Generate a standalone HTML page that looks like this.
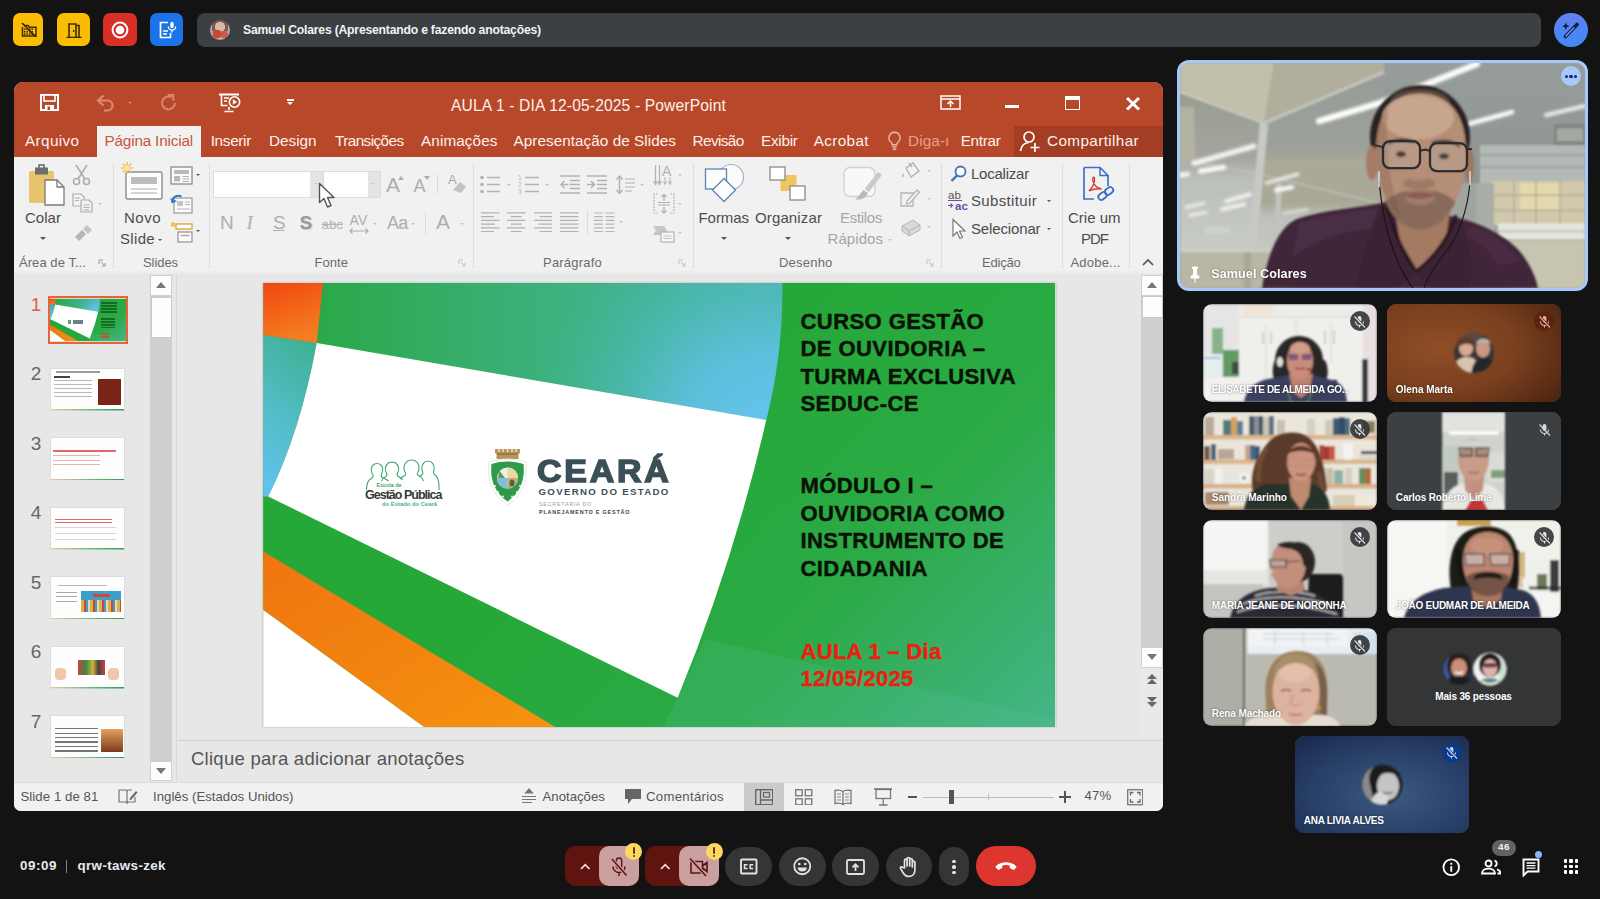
<!DOCTYPE html>
<html lang="pt-BR">
<head>
<meta charset="utf-8">
<title>Meet</title>
<style>
*{box-sizing:border-box;margin:0;padding:0}
html,body{width:1600px;height:899px;overflow:hidden;background:#131313}
body{font-family:"Liberation Sans",sans-serif;color:#fff;position:relative}
.abs{position:absolute}
#stage{position:absolute;left:0;top:0;width:1600px;height:899px;overflow:hidden;background:#131313}
/* top bar */
.tb{position:absolute;top:13px;width:33px;height:34px;border-radius:8px}
#namebar{position:absolute;left:197px;top:13px;width:1344px;height:34px;border-radius:8px;background:#3c4043}
#namebar span{position:absolute;left:46px;top:9px;font-size:12.5px;font-weight:bold;color:#f1f3f4;letter-spacing:-0.1px;white-space:nowrap}
/* ppt window */
#ppt{position:absolute;left:14px;top:82px;width:1149px;height:729px;border-radius:9px 9px 7px 7px;overflow:hidden;background:#e7e7e7;color:#444}
#ppt .title{position:absolute;left:0;top:0;width:100%;height:75px;background:#b8482a}
#ribbon{position:absolute;left:0;top:75px;width:100%;height:115px;background:#f2f1f1}
.tab{position:absolute;top:49px;font-size:17px;color:#fbe9e3;white-space:nowrap;letter-spacing:-0.2px}
.rl{position:absolute;font-size:16px;color:#4a4a4a;white-space:nowrap;letter-spacing:-0.2px}
.gl{position:absolute;top:172px;font-size:14.5px;color:#666;white-space:nowrap;letter-spacing:-0.2px}
.vsep{position:absolute;top:82px;width:1px;height:104px;background:#dcdcdc}
/* tiles */
.tile{position:absolute;width:174px;height:98px;border-radius:9px;overflow:hidden;background:#3c4043}
.tile .nm{position:absolute;left:8px;bottom:6px;font-size:11px;font-weight:bold;color:#fff;white-space:nowrap;letter-spacing:-0.3px;text-shadow:0 0 2px rgba(0,0,0,.6)}
.mic{position:absolute;right:8px;top:8px;width:18px;height:18px;border-radius:50%;background:rgba(50,50,50,.85)}
/* bottom */
.cb{position:absolute;top:850px;height:31px;border-radius:16px;background:#333537}
.t{position:absolute;white-space:nowrap;line-height:1}
.b{position:absolute;display:block}
.dd{position:absolute;display:block;width:0;height:0;border-style:solid;border-color:transparent}
</style>
</head>
<body>
<div id="stage">
<svg width="0" height="0" style="position:absolute">
<defs>
<filter id="bl08" x="-5%" y="-5%" width="110%" height="110%"><feGaussianBlur stdDeviation="0.8"/></filter>
<filter id="bl1" x="-5%" y="-5%" width="110%" height="110%"><feGaussianBlur stdDeviation="1.1"/></filter>
<filter id="bl2" x="-10%" y="-10%" width="120%" height="120%"><feGaussianBlur stdDeviation="2"/></filter>
<filter id="bl4" x="-10%" y="-10%" width="120%" height="120%"><feGaussianBlur stdDeviation="4"/></filter>
<linearGradient id="gR" gradientUnits="userSpaceOnUse" x1="450" y1="100" x2="820" y2="470"><stop offset="0" stop-color="#25a838"/><stop offset=".45" stop-color="#2baa46"/><stop offset="1" stop-color="#49b692"/></linearGradient>
<linearGradient id="gT" x1="0" y1="0" x2="1" y2="0"><stop offset="0" stop-color="#2aa848"/><stop offset=".5" stop-color="#3db17e"/><stop offset="1" stop-color="#49b5a6"/></linearGradient>
<radialGradient id="gT2" gradientUnits="userSpaceOnUse" cx="500" cy="150" r="230"><stop offset="0" stop-color="#66c4ee"/><stop offset=".35" stop-color="#60c1e6" stop-opacity=".85"/><stop offset="1" stop-color="#4ab6ae" stop-opacity="0"/></radialGradient>
<linearGradient id="gL" x1="0.6" y1="0" x2="0.3" y2="1"><stop offset="0" stop-color="#3fb296"/><stop offset=".5" stop-color="#52bcc4"/><stop offset="1" stop-color="#62c2ee"/></linearGradient>
<linearGradient id="gO" x1="0" y1="0" x2="0.35" y2="1"><stop offset="0" stop-color="#f0440e"/><stop offset="1" stop-color="#f47d20"/></linearGradient>
<linearGradient id="gO2" x1="0" y1="0" x2="1" y2="1"><stop offset="0" stop-color="#ef7410"/><stop offset="1" stop-color="#f5920f"/></linearGradient>
<symbol id="slideart" viewBox="0 0 792 444" preserveAspectRatio="none">
<rect width="792" height="444" fill="url(#gR)"/><rect x="-3" y="200" width="10" height="80" fill="#24a83a"/>
<path d="M519 0Q520 70 503 137Q470 280 414.400 414.800V444H792V0z" fill="url(#gR)"/>
<path d="M442 356L792 436V444H400z" fill="#55bd94" opacity=".22"/>
<path d="M60 0H519Q520 70 503 137L53.500 60z" fill="url(#gT)"/>
<path d="M60 0H519Q520 70 503 137L53.500 60z" fill="url(#gT2)"/>
<path d="M-3 51.600L53.500 60Q37 150 5 213.500H-3z" fill="url(#gL)"/>
<path d="M-3 -3H60L53.500 60 -3 51.600z" fill="url(#gO)"/>
<path d="M53.500 60L503 137Q470 280 414.400 414.800L5 213.500Q37 150 53.500 60z" fill="#fff"/>
<path d="M-3 266.700L292 444H160.700L-3 324.800z" fill="url(#gO2)"/>
<path d="M-3 324.800L160.700 444H-3z" fill="#fff"/>
</symbol>
</defs>
</svg>

<i class="b" style="left:13.2px;top:13.2px;width:30.0px;height:33.2px;background:#fbbc04;border-radius:7px"></i>
<i class="b" style="left:57.2px;top:13.2px;width:33.0px;height:33.2px;background:#fbbc04;border-radius:7px"></i>
<i class="b" style="left:103.2px;top:13.2px;width:33.6px;height:33.2px;background:#d93025;border-radius:7px"></i>
<i class="b" style="left:150.0px;top:13.2px;width:33.4px;height:33.2px;background:#1a73e8;border-radius:7px"></i>
<svg class="b" style="left:20.5px;top:21.5px;" width="16.5" height="15.5" viewBox="0 0 16.5 15.5"><path d="M3.500 3.500H7l1.500 1.800h6.500v8.700H1.500V5" fill="none" stroke="#3a2c02" stroke-width="1.500"/><path d="M3 7.300h10M3 9.700h10M3 12.100h10" stroke="#3a2c02" stroke-width="1.500" stroke-dasharray="1.500 1"/><path d="M1 1l14 14" stroke="#3a2c02" stroke-width="1.700"/></svg>
<svg class="b" style="left:66.0px;top:22.5px;" width="16.0" height="15.5" viewBox="0 0 16 15.500"><path d="M.5 14.500h15" stroke="#3a2c02" stroke-width="1.600"/><path d="M3 14V1h7v13M10 2.500h3V14" fill="none" stroke="#3a2c02" stroke-width="1.600"/><circle cx="7.700" cy="8" r=".9" fill="#3a2c02"/></svg>
<svg class="b" style="left:111.0px;top:21.0px;" width="18.0" height="18.0" viewBox="0 0 18 18"><circle cx="9" cy="9" r="7.400" fill="none" stroke="#fff" stroke-width="2"/><circle cx="9" cy="9" r="4.300" fill="#fff"/></svg>
<svg class="b" style="left:158.0px;top:21.0px;" width="19.0" height="18.0" viewBox="0 0 19 18"><path d="M10 1.500H2.500v15h10V12" fill="none" stroke="#fff" stroke-width="1.700"/><path d="M5 10h5M5 13h4" stroke="#fff" stroke-width="1.500"/><rect x="12.300" y=".8" width="3.400" height="6.400" rx="1.700" fill="#fff"/><path d="M10.300 5.500a3.700 3.700 0 0 0 7.400 0M14 9.200v2.300" fill="none" stroke="#fff" stroke-width="1.300"/></svg>
<i class="b" style="left:196.7px;top:13.2px;width:1344.5px;height:33.4px;background:#3c4043;border-radius:8px"></i>
<i class="b" style="left:209.7px;top:20.0px;width:20.3px;height:20.3px;border-radius:50%;background:radial-gradient(circle at 35% 70%,#c9473a 0 22%,transparent 24%),radial-gradient(circle at 70% 72%,#d1574a 0 18%,transparent 20%),radial-gradient(circle at 50% 35%,#d8b8a8 0 30%,#7a5a55 32% 50%,#b9a9a8 52%)"></i>
<span class="t" style="left:243.0px;top:24.2px;font-size:12.2px;letter-spacing:-0.21px;color:#f1f3f4;font-weight:bold;">Samuel Colares (Apresentando e fazendo anotações)</span>
<i class="b" style="left:1554.0px;top:12.7px;width:34.0px;height:34.3px;border-radius:50%;background:linear-gradient(170deg,#6a7fee,#4a86f5 60%,#3f8bf7)"></i>
<svg class="b" style="left:1561.0px;top:21.0px;" width="20.0" height="18.0" viewBox="0 0 20 18"><path d="M4.500 15.500L16 3.500" stroke="#0b1d4d" stroke-width="3.600" stroke-linecap="round"/><path d="M5 15L13 6.700" stroke="#8fa8f5" stroke-width="1.200" stroke-linecap="round"/><path d="M4.800 1.500l1.100 2.600 2.600 1.100-2.600 1.100-1.100 2.600-1.100-2.600L1.100 5.200l2.600-1.100z" fill="#0b1d4d"/></svg>

<div id="ppt">
<div class="title"></div>
<i class="b" style="left:1000.0px;top:44.0px;width:149.0px;height:31.0px;background:#a33d23"></i>
<i class="b" style="left:83.0px;top:43.5px;width:104.0px;height:32.5px;background:#f2f1f1"></i>
<span class="t" style="left:437.0px;top:15.8px;font-size:15.6px;letter-spacing:0.15px;color:#fdf1ec;">AULA 1 - DIA 12-05-2025 - PowerPoint</span>
<svg class="b" style="left:26.0px;top:12.0px;" width="19.0" height="17.0" viewBox="0 0 19 17"><path d="M1 1h17v15H1z" fill="none" stroke="#fff" stroke-width="2"/><rect x="4" y="1" width="11" height="6" fill="#b8482a" stroke="#fff" stroke-width="1.6"/><rect x="5" y="11" width="9" height="5" fill="#fff"/><rect x="7.5" y="12.5" width="2.5" height="3.5" fill="#b8482a"/></svg>
<svg class="b" style="left:82.0px;top:12.0px;" width="20.0" height="18.0" viewBox="0 0 20 18"><path d="M2 6.5h9.5a5 5 0 0 1 0 10H8" fill="none" stroke="#dd8a70" stroke-width="2.2"/><path d="M7.5 1.5L2 6.5l5.5 5" fill="none" stroke="#dd8a70" stroke-width="2.2"/></svg>
<i class="dd" style="left:113.6px;top:19.8px;border-width:2.6px 2.4px 0 2.4px;border-top-color:#dd8a70"></i>
<svg class="b" style="left:146.0px;top:12.0px;" width="17.0" height="18.0" viewBox="0 0 17 18"><path d="M11.5 3.2A6.5 6.5 0 1 0 15 9" fill="none" stroke="#d98367" stroke-width="2.2"/><path d="M8 1.2h5.2v5.2" fill="none" stroke="#d98367" stroke-width="2.2"/></svg>
<svg class="b" style="left:204.0px;top:11.0px;" width="24.0" height="20.0" viewBox="0 0 24 20"><path d="M1 1.5h20" stroke="#fff" stroke-width="2"/><path d="M3.5 2v10.5h6" fill="none" stroke="#fff" stroke-width="1.6"/><path d="M6 5h5M6 8h3" stroke="#fff" stroke-width="1.3"/><circle cx="16.5" cy="9" r="5.2" fill="#b8482a" stroke="#fff" stroke-width="1.6"/><path d="M14.8 6.3l4.4 2.7-4.4 2.7z" fill="#fff"/><path d="M11 14v3M6.5 18.5h9" stroke="#fff" stroke-width="1.6"/></svg>
<i class="b" style="left:272.5px;top:17.0px;width:7.0px;height:1.6px;background:#fff"></i>
<i class="dd" style="left:272.6px;top:20.3px;border-width:3.7px 3.4px 0 3.4px;border-top-color:#fff"></i>
<svg class="b" style="left:926.0px;top:13.0px;" width="21.0" height="15.0" viewBox="0 0 21 15"><rect x="1" y="1" width="19" height="13" fill="none" stroke="#fff" stroke-width="1.5"/><path d="M1 4h19" stroke="#fff" stroke-width="1.5"/><path d="M10.5 12V6.5M7.5 9l3-3 3 3" fill="none" stroke="#fff" stroke-width="1.5"/></svg>
<i class="b" style="left:990.5px;top:23.0px;width:14.0px;height:2.6px;background:#fff"></i>
<i class="b" style="left:1051.0px;top:13.5px;width:14.5px;height:14.0px;border:1.6px solid #fff;border-top-width:4px"></i>
<svg class="b" style="left:1111.0px;top:13.5px;" width="16.0" height="15.5" viewBox="0 0 16 15.5"><path d="M2 2l12 11.5M14 2L2 13.5" stroke="#fff" stroke-width="3"/></svg>
<span class="t" style="left:11.0px;top:50.5px;font-size:15.3px;letter-spacing:0.37px;color:#fdf1ec;">Arquivo</span>
<span class="t" style="left:196.7px;top:50.5px;font-size:15.3px;letter-spacing:-0.32px;color:#fdf1ec;">Inserir</span>
<span class="t" style="left:255.0px;top:50.5px;font-size:15.3px;letter-spacing:-0.02px;color:#fdf1ec;">Design</span>
<span class="t" style="left:321.0px;top:50.5px;font-size:15.3px;letter-spacing:-0.58px;color:#fdf1ec;">Transições</span>
<span class="t" style="left:407.0px;top:50.5px;font-size:15.3px;letter-spacing:0.09px;color:#fdf1ec;">Animações</span>
<span class="t" style="left:499.5px;top:50.5px;font-size:15.3px;letter-spacing:0.04px;color:#fdf1ec;">Apresentação de Slides</span>
<span class="t" style="left:678.6px;top:50.5px;font-size:15.3px;letter-spacing:-0.61px;color:#fdf1ec;">Revisão</span>
<span class="t" style="left:747.0px;top:50.5px;font-size:15.3px;letter-spacing:-0.28px;color:#fdf1ec;">Exibir</span>
<span class="t" style="left:799.7px;top:50.5px;font-size:15.3px;letter-spacing:0.37px;color:#fdf1ec;">Acrobat</span>
<span class="t" style="left:946.7px;top:50.5px;font-size:15.3px;letter-spacing:-0.31px;color:#fdf1ec;">Entrar</span>
<span class="t" style="left:1033.0px;top:50.5px;font-size:15.3px;letter-spacing:0.37px;color:#fdf1ec;">Compartilhar</span>
<span class="t" style="left:90.5px;top:50.5px;font-size:15.3px;letter-spacing:-0.18px;color:#c9563a;">Página Inicial</span>
<span class="t" style="left:894.0px;top:50.5px;font-size:15.3px;letter-spacing:0.11px;color:#e3a08c;">Diga-ı</span>
<svg class="b" style="left:873.0px;top:49.0px;" width="15.0" height="21.0" viewBox="0 0 15 21"><path d="M7.5 1.2a5.6 5.6 0 0 1 3.4 10c-.8.8-1.1 1.5-1.1 2.6H5.2c0-1.100-.3-1.800-1.100-2.600a5.600 5.600 0 0 1 3.400-10z" fill="none" stroke="#eab7a6" stroke-width="1.4"/><path d="M5.300 16h4.400M5.800 18.300h3.400" stroke="#eab7a6" stroke-width="1.4"/></svg>
<svg class="b" style="left:1005.0px;top:48.0px;" width="22.0" height="23.0" viewBox="0 0 22 23"><circle cx="10" cy="7" r="5" fill="none" stroke="#fff" stroke-width="1.7"/><path d="M1.500 21c.8-5 3.500-8 8-8.500M16 13v9M11.500 17.500h9" fill="none" stroke="#fff" stroke-width="1.700"/></svg>
<div id="ribbon"></div>
<i class="b" style="left:98.5px;top:81.0px;width:1.0px;height:105.0px;background:#dedede"></i>
<i class="b" style="left:195.0px;top:81.0px;width:1.0px;height:105.0px;background:#dedede"></i>
<i class="b" style="left:458.5px;top:81.0px;width:1.0px;height:105.0px;background:#dedede"></i>
<i class="b" style="left:678.5px;top:81.0px;width:1.0px;height:105.0px;background:#dedede"></i>
<i class="b" style="left:926.5px;top:81.0px;width:1.0px;height:105.0px;background:#dedede"></i>
<i class="b" style="left:1048.0px;top:81.0px;width:1.0px;height:105.0px;background:#dedede"></i>
<i class="b" style="left:1114.7px;top:81.0px;width:1.0px;height:105.0px;background:#dedede"></i>
<svg class="b" style="left:14.0px;top:82.0px;" width="38.0" height="42.0" viewBox="0 0 38 42"><rect x="1" y="7" width="25" height="32" rx="1.500" fill="#e9c46f"/><rect x="7" y="3.500" width="13" height="7" fill="#6d6d6d"/><rect x="11" y="1" width="5" height="5" fill="none" stroke="#6d6d6d" stroke-width="1.600"/><path d="M17 16h12l7 7v18H17z" fill="#fff" stroke="#7a7a7a" stroke-width="1.300"/><path d="M29 16v7h7" fill="none" stroke="#7a7a7a" stroke-width="1.300"/></svg>
<span class="t" style="left:11.0px;top:127.7px;font-size:15px;letter-spacing:0.03px;color:#4c4c4c;">Colar</span>
<i class="dd" style="left:25.5px;top:154.5px;border-width:3.2px 3.0px 0 3.0px;border-top-color:#555"></i>
<svg class="b" style="left:58.0px;top:82.0px;" width="19.0" height="22.0" viewBox="0 0 19 22"><path d="M4 1l9 14M15 1L6 15" stroke="#adadad" stroke-width="1.600"/><circle cx="4.500" cy="17.500" r="3" fill="none" stroke="#adadad" stroke-width="1.600"/><circle cx="14.500" cy="17.500" r="3" fill="none" stroke="#adadad" stroke-width="1.600"/></svg>
<svg class="b" style="left:58.0px;top:111.0px;" width="21.0" height="20.0" viewBox="0 0 21 20"><path d="M1 1h8l3 3v9H1z" fill="#f4f4f4" stroke="#adadad" stroke-width="1.200"/><path d="M9 7h8l3 3v9H9z" fill="#f4f4f4" stroke="#adadad" stroke-width="1.200"/><path d="M11.500 12h6M11.500 14.500h6M11.500 17h6M3 5h5M3 7.500h4" stroke="#adadad" stroke-width="1"/></svg>
<i class="dd" style="left:84.1px;top:120.8px;border-width:2.6px 2.4px 0 2.4px;border-top-color:#bbb"></i>
<svg class="b" style="left:59.0px;top:142.0px;" width="20.0" height="18.0" viewBox="0 0 20 18"><path d="M2 13l7-7 4 4-7 7z" fill="#b5b5b5"/><path d="M10 5l4-4 5 5-4 4z" fill="#c4c4c4"/></svg>
<span class="t" style="left:5.0px;top:174.0px;font-size:13px;letter-spacing:0.06px;color:#6b6b6b;">Área de T...</span>
<svg class="b" style="left:84.0px;top:177.0px;" width="8.0" height="8.0" viewBox="0 0 8 8"><path d="M1 5V1h4M3 3l4 4M7 4v3H4" fill="none" stroke="#9a9a9a" stroke-width="1"/></svg>
<svg class="b" style="left:106.0px;top:79.0px;" width="44.0" height="40.0" viewBox="0 0 44 40"><rect x="6" y="11" width="36" height="27" rx="1.500" fill="#fdfdfd" stroke="#8d8d8d" stroke-width="1.400"/><rect x="11" y="16" width="26" height="7" fill="#bdbdbd"/><path d="M11 28h26M11 32h26" stroke="#c4c4c4" stroke-width="1.400"/><g stroke="#f0c24d" stroke-width="1.500"><path d="M7 1v12M1 7h12M2.800 2.800l8.400 8.400M11.200 2.800l-8.400 8.400"/></g><circle cx="7" cy="7" r="2.600" fill="#fbe7a6"/></svg>
<span class="t" style="left:110.0px;top:127.7px;font-size:15px;letter-spacing:0.50px;color:#4c4c4c;">Novo</span>
<span class="t" style="left:106.0px;top:148.7px;font-size:15px;letter-spacing:0.33px;color:#4c4c4c;">Slide</span>
<i class="dd" style="left:144.3px;top:156.7px;border-width:2.9px 2.7px 0 2.7px;border-top-color:#555"></i>
<svg class="b" style="left:156.0px;top:84.0px;" width="23.0" height="19.0" viewBox="0 0 23 19"><rect x="1" y="1" width="21" height="17" fill="#fafafa" stroke="#8d8d8d" stroke-width="1.300"/><rect x="4" y="4" width="15" height="4" fill="#b9b9b9"/><rect x="4" y="10" width="6" height="5.500" fill="#b9b9b9"/><path d="M12.500 10.500h6.500M12.500 13h6.500M12.500 15.500h6.500" stroke="#b0b0b0" stroke-width="1"/></svg>
<i class="dd" style="left:181.9px;top:91.7px;border-width:2.7px 2.5px 0 2.5px;border-top-color:#555"></i>
<svg class="b" style="left:156.0px;top:111.0px;" width="23.0" height="21.0" viewBox="0 0 23 21"><rect x="4" y="5" width="18" height="15" fill="#fafafa" stroke="#9a9a9a" stroke-width="1.200"/><rect x="7" y="8" width="6" height="5" fill="#c4c4c4"/><path d="M15 9h5M15 11.500h5M7 16h13" stroke="#b5b5b5" stroke-width="1"/><path d="M2 9.500C2 4 7 1.500 11.500 3.500" fill="none" stroke="#3b78c5" stroke-width="2"/><path d="M0 5l2.200 5.500L7 8z" fill="#3b78c5"/></svg>
<svg class="b" style="left:156.0px;top:139.0px;" width="24.0" height="22.0" viewBox="0 0 24 22"><rect x="6" y="3" width="16" height="5" fill="#fff" stroke="#e3a542" stroke-width="1.400"/><rect x="1" y="1.500" width="4" height="4" fill="#f0c24d"/><rect x="8" y="11" width="14" height="10" fill="#fafafa" stroke="#9a9a9a" stroke-width="1.300"/><path d="M10.500 14.500h9" stroke="#aaa" stroke-width="1.500"/></svg>
<i class="dd" style="left:181.9px;top:148.2px;border-width:2.7px 2.5px 0 2.5px;border-top-color:#555"></i>
<span class="t" style="left:129.0px;top:174.0px;font-size:13px;letter-spacing:-0.07px;color:#6b6b6b;">Slides</span>
<i class="b" style="left:199.0px;top:89.0px;width:110.5px;height:27.0px;background:#fff;border:1px solid #dcdcdc"></i>
<i class="b" style="left:296.0px;top:90.0px;width:12.5px;height:25.0px;background:#e4e4e4"></i>
<i class="b" style="left:309.0px;top:89.0px;width:58.0px;height:27.0px;background:#fff;border:1px solid #dcdcdc"></i>
<i class="b" style="left:353.5px;top:90.0px;width:12.5px;height:25.0px;background:#e4e4e4"></i>
<i class="dd" style="left:357.1px;top:101.3px;border-width:2.6px 2.4px 0 2.4px;border-top-color:#c8c8c8"></i>
<i class="dd" style="left:299.6px;top:101.3px;border-width:2.6px 2.4px 0 2.4px;border-top-color:#c8c8c8"></i>
<span class="t" style="left:372.0px;top:92.2px;font-size:21px;letter-spacing:-0.51px;color:#adadad;">A</span>
<svg class="b" style="left:384.0px;top:93.0px;" width="6.0" height="6.0" viewBox="0 0 6 6"><path d="M0 5l3-4 3 4z" fill="#adadad"/></svg>
<span class="t" style="left:399.5px;top:94.9px;font-size:18px;letter-spacing:-0.01px;color:#adadad;">A</span>
<svg class="b" style="left:410.0px;top:93.0px;" width="6.0" height="6.0" viewBox="0 0 6 6"><path d="M0 1l3 4 3-4z" fill="#adadad"/></svg>
<i class="b" style="left:423.0px;top:92.0px;width:1.0px;height:20.0px;background:#dcdcdc"></i>
<svg class="b" style="left:434.0px;top:91.0px;" width="19.0" height="22.0" viewBox="0 0 19 22"><text x="0" y="11" font-family="Liberation Sans,sans-serif" font-size="13" fill="#a8a8a8">A</text><path d="M5 17l7-8 6 4.500-5 6.500z" fill="#c2c2c2"/></svg>
<span class="t" style="left:206.0px;top:131.3px;font-size:19px;letter-spacing:-0.22px;color:#adadad;">N</span>
<span class="t" style="left:232.5px;top:131.3px;font-size:19px;letter-spacing:3.72px;color:#adadad;font-style:italic;font-family:'Liberation Serif',serif;">I</span>
<span class="t" style="left:259.0px;top:131.3px;font-size:19px;letter-spacing:-1.17px;color:#adadad;text-decoration:underline;">S</span>
<span class="t" style="left:285.5px;top:131.3px;font-size:19px;letter-spacing:-0.67px;color:#999;font-weight:bold;text-shadow:1px 1px 1px #ccc;">S</span>
<span class="t" style="left:307.5px;top:135.6px;font-size:13.5px;letter-spacing:-0.09px;color:#b3b3b3;text-decoration:line-through;">abc</span>
<span class="t" style="left:335.5px;top:131.3px;font-size:14px;letter-spacing:0.18px;color:#adadad;">AV</span>
<svg class="b" style="left:335.0px;top:146.0px;" width="20.0" height="6.0" viewBox="0 0 20 6"><path d="M1 3h18M3.500 .5L1 3l2.500 2.500M16.500 .5L19 3l-2.500 2.500" fill="none" stroke="#adadad" stroke-width="1.100"/></svg>
<i class="dd" style="left:359.4px;top:140.9px;border-width:2.2px 2.1px 0 2.1px;border-top-color:#c4c4c4"></i>
<span class="t" style="left:373.0px;top:131.9px;font-size:18px;letter-spacing:-0.76px;color:#adadad;">Aa</span>
<i class="dd" style="left:396.9px;top:140.9px;border-width:2.2px 2.1px 0 2.1px;border-top-color:#c4c4c4"></i>
<i class="b" style="left:411.0px;top:130.0px;width:1.0px;height:22.0px;background:#dcdcdc"></i>
<span class="t" style="left:422.0px;top:128.7px;font-size:21px;letter-spacing:-0.51px;color:#adadad;">A</span>
<i class="dd" style="left:445.9px;top:140.9px;border-width:2.2px 2.1px 0 2.1px;border-top-color:#c4c4c4"></i>
<span class="t" style="left:300.5px;top:174.0px;font-size:13px;letter-spacing:0.05px;color:#6b6b6b;">Fonte</span>
<svg class="b" style="left:444.0px;top:177.0px;" width="8.0" height="8.0" viewBox="0 0 8 8"><path d="M1 5V1h4M3 3l4 4M7 4v3H4" fill="none" stroke="#c0c0c0" stroke-width="1"/></svg>
<svg class="b" style="left:466.0px;top:92.5px;" width="21.0" height="19.0" viewBox="0 0 21 19"><g fill="#b2b2b2"><circle cx="2" cy="2.500" r="1.800"/><circle cx="2" cy="9.500" r="1.800"/><circle cx="2" cy="16.500" r="1.800"/></g><path d="M7 2.500h13M7 9.500h13M7 16.500h13" stroke="#b2b2b2" stroke-width="1.300"/></svg>
<i class="dd" style="left:492.9px;top:101.5px;border-width:2.2px 2.1px 0 2.1px;border-top-color:#c4c4c4"></i>
<svg class="b" style="left:504.0px;top:92.5px;" width="21.5" height="19.0" viewBox="0 0 21.500 19"><g font-family="Liberation Sans,sans-serif" font-size="6.500" fill="#b2b2b2"><text x="0" y="5">1</text><text x="0" y="12">2</text><text x="0" y="19">3</text></g><path d="M7 2.500h14M7 9.500h14M7 16.500h14" stroke="#b2b2b2" stroke-width="1.300"/></svg>
<i class="dd" style="left:531.4px;top:101.5px;border-width:2.2px 2.1px 0 2.1px;border-top-color:#c4c4c4"></i>
<svg class="b" style="left:545.5px;top:92.5px;" width="20.5" height="19.0" viewBox="0 0 20.500 19"><path d="M0 1h20.500M10 5.500h10.500M10 9.500h10.500M10 13.500h10.500M0 18h20.500" stroke="#b2b2b2" stroke-width="1.300"/><path d="M8.500 9.500H1M4.500 6L1 9.500 4.500 13" fill="none" stroke="#b2b2b2" stroke-width="1.500"/></svg>
<svg class="b" style="left:573.0px;top:92.5px;" width="20.0" height="19.0" viewBox="0 0 20 19"><path d="M0 1h20M10 5.500h10M10 9.500h10M10 13.500h10M0 18h20" stroke="#b2b2b2" stroke-width="1.300"/><path d="M0 9.500h7.500M4 6l3.500 3.500L4 13" fill="none" stroke="#b2b2b2" stroke-width="1.500"/></svg>
<svg class="b" style="left:602.0px;top:92.5px;" width="19.0" height="19.5" viewBox="0 0 19 19.500"><path d="M3.500 1v17.500M.5 4.500l3-3.500 3 3.500M.5 15l3 3.500 3-3.500" fill="none" stroke="#b2b2b2" stroke-width="1.400"/><path d="M9 4h10M9 8h10M9 12h10M9 16h7" stroke="#b2b2b2" stroke-width="1.200"/></svg>
<i class="dd" style="left:625.9px;top:101.5px;border-width:2.2px 2.1px 0 2.1px;border-top-color:#c4c4c4"></i>
<svg class="b" style="left:639.0px;top:82.0px;" width="21.0" height="22.0" viewBox="0 0 21 22"><path d="M2.500 1v19M6.500 1v19M.5 17l2 3.500 2-3.500M4.500 17l2 3.500 2-3.500" fill="none" stroke="#b2b2b2" stroke-width="1.200"/><text x="9" y="12" font-family="Liberation Sans,sans-serif" font-size="14" fill="#b2b2b2">A</text><path d="M12 13v7M17 13v7M10.300 17.500l1.700 3 1.700-3M15.300 17.500l1.700 3 1.700-3" fill="none" stroke="#b2b2b2" stroke-width="1"/></svg>
<i class="dd" style="left:664.4px;top:92.0px;border-width:2.2px 2.1px 0 2.1px;border-top-color:#c4c4c4"></i>
<svg class="b" style="left:639.0px;top:111.0px;" width="22.0" height="21.5" viewBox="0 0 22 21.500"><path d="M5 1H1v19h4M17 1h4v19h-4" fill="none" stroke="#b2b2b2" stroke-width="1.200" stroke-dasharray="2 1.200"/><path d="M11 1.500v6.500M8.500 4L11 1.500 13.500 4M11 20v-6.500M8.500 17.500L11 20l2.500-2.500" fill="none" stroke="#b2b2b2" stroke-width="1.300"/><path d="M5 9.500h12M5 12h12" stroke="#b2b2b2" stroke-width="1.100"/></svg>
<i class="dd" style="left:664.4px;top:121.0px;border-width:2.2px 2.1px 0 2.1px;border-top-color:#c4c4c4"></i>
<svg class="b" style="left:638.0px;top:143.0px;" width="23.0" height="18.0" viewBox="0 0 23 18"><path d="M1 1h11l3 4.500-3 4.500H1l3-4.500z" fill="#c6c6c6"/><rect x="9" y="7" width="13" height="10" fill="#f6f6f6" stroke="#b2b2b2" stroke-width="1.200"/><path d="M11.500 11h8M11.500 13.500h8" stroke="#c0c0c0" stroke-width="1"/></svg>
<i class="dd" style="left:664.4px;top:150.4px;border-width:2.2px 2.1px 0 2.1px;border-top-color:#c4c4c4"></i>
<svg class="b" style="left:467.0px;top:129.5px;" width="18.5" height="20.5" viewBox="0 0 18.5 20.5"><path d="M0.0 0.8h18.5M0.0 4.6h12.9M0.0 8.4h18.5M0.0 12.1h13.9M0.0 15.9h18.5M0.0 19.7h12.9" stroke="#b2b2b2" stroke-width="1.3"/></svg>
<svg class="b" style="left:493.0px;top:129.5px;" width="18.5" height="20.5" viewBox="0 0 18.5 20.5"><path d="M0.0 0.8h18.5M3.7 4.6h11.1M0.0 8.4h18.5M3.7 12.1h11.1M0.0 15.9h18.5M3.7 19.7h11.1" stroke="#b2b2b2" stroke-width="1.3"/></svg>
<svg class="b" style="left:519.5px;top:129.5px;" width="18.5" height="20.5" viewBox="0 0 18.5 20.5"><path d="M0.0 0.8h18.5M5.6 4.6h12.9M0.0 8.4h18.5M4.6 12.1h13.9M0.0 15.9h18.5M5.6 19.7h12.9" stroke="#b2b2b2" stroke-width="1.3"/></svg>
<svg class="b" style="left:546.0px;top:129.5px;" width="18.5" height="20.5" viewBox="0 0 18.5 20.5"><path d="M0.0 0.8h18.5M0.0 4.6h18.5M0.0 8.4h18.5M0.0 12.1h18.5M0.0 15.9h18.5M0.0 19.7h18.5" stroke="#b2b2b2" stroke-width="1.3"/></svg>
<i class="b" style="left:572.5px;top:129.0px;width:1.0px;height:23.0px;background:#dcdcdc"></i>
<svg class="b" style="left:580.0px;top:129.5px;" width="20.5" height="20.5" viewBox="0 0 20.500 20.500"><path d="M0 1h9M0 4.700h9M0 8.400h9M0 12.100h9M0 15.800h9M0 19.500h9M11.500 1h9M11.500 4.700h9M11.500 8.400h9M11.500 12.100h9M11.500 15.800h9M11.500 19.500h9" stroke="#b5b5b5" stroke-width="1.200"/></svg>
<i class="dd" style="left:605.4px;top:138.9px;border-width:2.2px 2.1px 0 2.1px;border-top-color:#c4c4c4"></i>
<span class="t" style="left:529.0px;top:174.0px;font-size:13px;letter-spacing:0.21px;color:#6b6b6b;">Parágrafo</span>
<svg class="b" style="left:664.0px;top:177.0px;" width="8.0" height="8.0" viewBox="0 0 8 8"><path d="M1 5V1h4M3 3l4 4M7 4v3H4" fill="none" stroke="#c0c0c0" stroke-width="1"/></svg>
<svg class="b" style="left:690.0px;top:81.0px;" width="42.0" height="40.0" viewBox="0 0 42 40"><circle cx="27" cy="14" r="12.500" fill="#fbfbfb" stroke="#9fb3cc" stroke-width="1.200"/><rect x="1.500" y="6" width="21" height="20" fill="#fcfcfc" stroke="#5f84b3" stroke-width="1.300"/><path d="M20 15.500l11.500 11.500L20 38.500 8.500 27z" fill="#fdfdfd" stroke="#5f84b3" stroke-width="1.300"/></svg>
<span class="t" style="left:684.5px;top:127.7px;font-size:15px;letter-spacing:-0.06px;color:#4c4c4c;">Formas</span>
<i class="dd" style="left:707.0px;top:154.5px;border-width:3.2px 3.0px 0 3.0px;border-top-color:#555"></i>
<svg class="b" style="left:755.0px;top:83.5px;" width="38.0" height="35.5" viewBox="0 0 38 35.500"><rect x="11.500" y="9" width="16" height="16" fill="#f0c560"/><rect x="1" y="1" width="15" height="13" fill="#fff" stroke="#8a8a8a" stroke-width="1.300"/><rect x="21" y="20" width="15" height="14" fill="#fff" stroke="#8a8a8a" stroke-width="1.300"/></svg>
<span class="t" style="left:741.0px;top:127.7px;font-size:15px;letter-spacing:0.13px;color:#4c4c4c;">Organizar</span>
<i class="dd" style="left:770.5px;top:154.5px;border-width:3.2px 3.0px 0 3.0px;border-top-color:#555"></i>
<svg class="b" style="left:828.0px;top:84.0px;" width="42.0" height="39.0" viewBox="0 0 42 39"><rect x="2" y="1.500" width="31" height="29" rx="6" fill="#f8f8f8" stroke="#d0d0d0" stroke-width="1.300"/><path d="M36 6c2 1 3 2 3.500 3.500L27 26l-4.500-3z" fill="#c9c9c9"/><path d="M21.500 24l4.500 3c-2 5-7 7-13 6.500 3-1.500 4-5 8.500-9.500z" fill="#b9b9b9"/></svg>
<span class="t" style="left:826.0px;top:127.7px;font-size:15px;letter-spacing:-0.31px;color:#a6a6a6;">Estilos</span>
<span class="t" style="left:813.5px;top:148.7px;font-size:15px;letter-spacing:0.07px;color:#a6a6a6;">Rápidos</span>
<i class="dd" style="left:874.4px;top:156.9px;border-width:2.2px 2.1px 0 2.1px;border-top-color:#c4c4c4"></i>
<svg class="b" style="left:886.0px;top:79.0px;" width="21.0" height="20.0" viewBox="0 0 21 20"><path d="M6 7l7-5 6 8-8 6z" fill="none" stroke="#b0b0b0" stroke-width="1.300"/><path d="M9 2l3 4" stroke="#b0b0b0" stroke-width="1.300"/><path d="M3 12c1.500 2 1.500 4 0 4.500-1.500-.5-1.500-2.500 0-4.500z" fill="#c0c0c0"/></svg>
<i class="dd" style="left:912.9px;top:88.0px;border-width:2.2px 2.1px 0 2.1px;border-top-color:#c4c4c4"></i>
<svg class="b" style="left:885.0px;top:106.0px;" width="22.0" height="20.0" viewBox="0 0 22 20"><path d="M2 5h12v13H2z" fill="none" stroke="#b5b5b5" stroke-width="1.300"/><path d="M8 13L18 2l2.500 2L11 15l-3.500 1z" fill="#f4f4f4" stroke="#b0b0b0" stroke-width="1.200"/></svg>
<i class="dd" style="left:912.9px;top:116.0px;border-width:2.2px 2.1px 0 2.1px;border-top-color:#c4c4c4"></i>
<svg class="b" style="left:885.0px;top:135.0px;" width="23.0" height="20.0" viewBox="0 0 23 20"><path d="M3 9l11-6 7 5v5l-11 6-7-5z" fill="#d9d9d9" stroke="#b8b8b8" stroke-width="1"/><path d="M3 9l7 5 11-6" fill="none" stroke="#b0b0b0" stroke-width="1"/><path d="M10 14v5" stroke="#b0b0b0" stroke-width="1"/></svg>
<i class="dd" style="left:912.9px;top:144.4px;border-width:2.2px 2.1px 0 2.1px;border-top-color:#c4c4c4"></i>
<span class="t" style="left:765.0px;top:174.0px;font-size:13px;letter-spacing:0.21px;color:#6b6b6b;">Desenho</span>
<svg class="b" style="left:912.0px;top:177.0px;" width="8.0" height="8.0" viewBox="0 0 8 8"><path d="M1 5V1h4M3 3l4 4M7 4v3H4" fill="none" stroke="#c0c0c0" stroke-width="1"/></svg>
<svg class="b" style="left:935.5px;top:83.0px;" width="17.5" height="17.0" viewBox="0 0 17.500 17"><circle cx="10.500" cy="6.500" r="5" fill="#fff" stroke="#3f74b6" stroke-width="1.800"/><path d="M7 10.500L1.500 16" stroke="#3f74b6" stroke-width="2.400"/></svg>
<span class="t" style="left:957.0px;top:83.7px;font-size:15px;letter-spacing:-0.23px;color:#4c4c4c;">Localizar</span>
<svg class="b" style="left:933.0px;top:108.0px;" width="22.0" height="22.0" viewBox="0 0 22 22"><g font-family="Liberation Sans,sans-serif" font-size="11.500" fill="#555"><text x="1" y="9">ab</text></g><path d="M1 10.500h14" stroke="#6a4fa3" stroke-width="1.100"/><g font-family="Liberation Sans,sans-serif" font-size="11.500" fill="#6a4fa3" font-weight="bold"><text x="8" y="20">ac</text></g><path d="M1 15.500h4.500M3.500 13.500l2 2-2 2" fill="none" stroke="#6a4fa3" stroke-width="1.100"/></svg>
<span class="t" style="left:957.0px;top:111.2px;font-size:15px;letter-spacing:0.35px;color:#4c4c4c;">Substituir</span>
<i class="dd" style="left:1032.6px;top:118.3px;border-width:2.6px 2.4px 0 2.4px;border-top-color:#555"></i>
<svg class="b" style="left:937.0px;top:136.0px;" width="16.0" height="22.0" viewBox="0 0 16 22"><path d="M2 1.500v16.500l4-4 3 6.500 2.500-1.200-3-6.300h5.500z" fill="#fff" stroke="#777" stroke-width="1.200"/></svg>
<span class="t" style="left:957.0px;top:138.7px;font-size:15px;letter-spacing:-0.14px;color:#4c4c4c;">Selecionar</span>
<i class="dd" style="left:1032.6px;top:145.8px;border-width:2.6px 2.4px 0 2.4px;border-top-color:#555"></i>
<span class="t" style="left:968.0px;top:174.0px;font-size:13px;letter-spacing:-0.21px;color:#6b6b6b;">Edição</span>
<svg class="b" style="left:1067.0px;top:84.0px;" width="36.0" height="39.0" viewBox="0 0 36 39"><path d="M3 1.500h16l8 8V20M3 1.500V33h10" fill="none" stroke="#3b6fc9" stroke-width="1.700"/><path d="M19 1.500v8h8" fill="none" stroke="#3b6fc9" stroke-width="1.500"/><path d="M8 25c4-4 6-9 5.500-13-1-2-2.500 0-1.500 3 1 4 4 7 8.500 8-3-.5-8 0-12.500 2z" fill="none" stroke="#d43a2f" stroke-width="1.300"/><g fill="none" stroke="#3b6fc9" stroke-width="1.800"><rect x="17" y="27" width="9" height="6" rx="3" transform="rotate(-38 21.500 30)"/><rect x="23.500" y="22" width="9" height="6" rx="3" transform="rotate(-38 28 25)"/></g></svg>
<span class="t" style="left:1054.0px;top:127.7px;font-size:15px;letter-spacing:-0.00px;color:#4c4c4c;">Crie um</span>
<span class="t" style="left:1067.0px;top:149.2px;font-size:15px;letter-spacing:-1.00px;color:#4c4c4c;">PDF</span>
<span class="t" style="left:1056.5px;top:174.0px;font-size:13px;letter-spacing:0.20px;color:#6b6b6b;">Adobe...</span>
<svg class="b" style="left:1128.0px;top:176.0px;" width="12.0" height="8.0" viewBox="0 0 12 8"><path d="M1 7l5-5 5 5" fill="none" stroke="#555" stroke-width="1.700"/></svg>
<svg class="b" style="left:304.0px;top:100.0px;" width="19.0" height="27.0" viewBox="0 0 19 27"><path d="M1.500 1.500v19l4.500-4 3.500 8.500 3.500-1.500-3.500-8h6.500z" fill="#fff" stroke="#555" stroke-width="1.400" stroke-linejoin="round"/></svg>
<i class="b" style="left:0.0px;top:189.0px;width:1149.0px;height:2.0px;background:#ededed"></i>
<i class="b" style="left:136.0px;top:193.0px;width:22.0px;height:506.0px;background:#cfcfcf"></i>
<i class="b" style="left:136.0px;top:193.0px;width:22.0px;height:21.0px;background:#fdfdfd;border:1px solid #d0d0d0"></i>
<i class="b" style="left:136.5px;top:214.5px;width:21.0px;height:41.5px;background:#fefefe;border:1px solid #cacaca"></i>
<i class="b" style="left:136.0px;top:679.0px;width:22.0px;height:20.0px;background:#fdfdfd;border:1px solid #d0d0d0"></i>
<svg class="b" style="left:142.0px;top:200.0px;" width="10.0" height="6.0" viewBox="0 0 10 6"><path d="M0 6l5-6 5 6z" fill="#777"/></svg>
<svg class="b" style="left:142.0px;top:686.0px;" width="10.0" height="6.0" viewBox="0 0 10 6"><path d="M0 0l5 6 5-6z" fill="#777"/></svg>
<i class="b" style="left:161.5px;top:193.0px;width:1.5px;height:506.0px;background:#dadada"></i>
<span class="t" style="left:16.8px;top:212.8px;font-size:19px;letter-spacing:-1.57px;color:#d9623f;">1</span>
<span class="t" style="left:16.8px;top:282.3px;font-size:19px;letter-spacing:-1.57px;color:#666;">2</span>
<i class="b" style="left:36.0px;top:285.6px;width:75.0px;height:43.0px;background:#fefefe;border:1px solid #dcdcdc;border-bottom:0;background-image:linear-gradient(90deg,#e9c9a0,#5fb877 60%,#3a9a58);background-size:100% 1.6px;background-position:0 100%;background-repeat:no-repeat"></i>
<span class="t" style="left:16.8px;top:351.8px;font-size:19px;letter-spacing:-1.57px;color:#666;">3</span>
<i class="b" style="left:36.0px;top:355.1px;width:75.0px;height:43.0px;background:#fefefe;border:1px solid #dcdcdc;border-bottom:0;background-image:linear-gradient(90deg,#e9c9a0,#5fb877 60%,#3a9a58);background-size:100% 1.6px;background-position:0 100%;background-repeat:no-repeat"></i>
<span class="t" style="left:16.8px;top:421.3px;font-size:19px;letter-spacing:-1.57px;color:#666;">4</span>
<i class="b" style="left:36.0px;top:424.6px;width:75.0px;height:43.0px;background:#fefefe;border:1px solid #dcdcdc;border-bottom:0;background-image:linear-gradient(90deg,#e9c9a0,#5fb877 60%,#3a9a58);background-size:100% 1.6px;background-position:0 100%;background-repeat:no-repeat"></i>
<span class="t" style="left:16.8px;top:490.8px;font-size:19px;letter-spacing:-1.57px;color:#666;">5</span>
<i class="b" style="left:36.0px;top:494.2px;width:75.0px;height:43.0px;background:#fefefe;border:1px solid #dcdcdc;border-bottom:0;background-image:linear-gradient(90deg,#e9c9a0,#5fb877 60%,#3a9a58);background-size:100% 1.6px;background-position:0 100%;background-repeat:no-repeat"></i>
<span class="t" style="left:16.8px;top:560.3px;font-size:19px;letter-spacing:-1.57px;color:#666;">6</span>
<i class="b" style="left:36.0px;top:563.8px;width:75.0px;height:43.0px;background:#fefefe;border:1px solid #dcdcdc;border-bottom:0;background-image:linear-gradient(90deg,#e9c9a0,#5fb877 60%,#3a9a58);background-size:100% 1.6px;background-position:0 100%;background-repeat:no-repeat"></i>
<span class="t" style="left:16.8px;top:629.8px;font-size:19px;letter-spacing:-1.57px;color:#666;">7</span>
<i class="b" style="left:36.0px;top:633.3px;width:75.0px;height:43.0px;background:#fefefe;border:1px solid #dcdcdc;border-bottom:0;background-image:linear-gradient(90deg,#e9c9a0,#5fb877 60%,#3a9a58);background-size:100% 1.6px;background-position:0 100%;background-repeat:no-repeat"></i>
<i class="b" style="left:33.5px;top:214.0px;width:80.0px;height:48.0px;border:2px solid #e8623a"></i>
<svg class="b" style="left:35.5px;top:216.0px;" width="76.0" height="44.0" viewBox="0 0 792 444"><use href="#slideart"/></svg>
<i class="b" style="left:87.0px;top:220.0px;width:16.0px;height:11.0px;background:repeating-linear-gradient(#135a20 0 2px,transparent 2px 3px);opacity:.8"></i>
<i class="b" style="left:87.0px;top:236.0px;width:14.0px;height:10.0px;background:repeating-linear-gradient(#135a20 0 2px,transparent 2px 3px);opacity:.8"></i>
<i class="b" style="left:87.0px;top:251.0px;width:8.0px;height:5.0px;background:repeating-linear-gradient(#c9502a 0 2px,transparent 2px 3px);opacity:.9"></i>
<i class="b" style="left:54.0px;top:238.0px;width:3.0px;height:4.0px;background:#5aa56c"></i>
<i class="b" style="left:59.0px;top:238.0px;width:10.0px;height:3.5px;background:#6f8187"></i>
<i class="b" style="left:84.0px;top:297.0px;width:22.5px;height:26.0px;background:#7a2418"></i>
<i class="b" style="left:42.0px;top:289.0px;width:44.0px;height:2.0px;background:#9a9a9a"></i>
<i class="b" style="left:40.0px;top:294.0px;width:16.0px;height:2.0px;background:#444"></i>
<i class="b" style="left:40.0px;top:298.0px;width:38.0px;height:20.0px;background:repeating-linear-gradient(#bbb 0 1px,transparent 1px 4px)"></i>
<i class="b" style="left:39.0px;top:368.0px;width:63.0px;height:1.5px;background:#e2686f"></i>
<i class="b" style="left:39.0px;top:373.0px;width:47.0px;height:10.0px;background:repeating-linear-gradient(#ecb0b0 0 1px,transparent 1px 4.5px)"></i>
<i class="b" style="left:41.0px;top:437.0px;width:57.0px;height:4.5px;background:repeating-linear-gradient(#e2686f 0 1.3px,transparent 1.3px 3px)"></i>
<i class="b" style="left:41.0px;top:445.0px;width:61.0px;height:14.0px;background:repeating-linear-gradient(#d6d6d6 0 1px,transparent 1px 6px)"></i>
<i class="b" style="left:67.0px;top:509.0px;width:39.5px;height:21.0px;background:linear-gradient(#3b9fc9 0 45%,transparent 45%),repeating-linear-gradient(90deg,#d9b24a 0 3px,#c9483a 3px 5px,#3b9fc9 5px 7px,#e8d9b0 7px 9px)"></i>
<i class="b" style="left:79.0px;top:511.5px;width:17.0px;height:3.0px;background:#d9443a"></i>
<i class="b" style="left:44.0px;top:502.5px;width:49.0px;height:1.5px;background:#b9b9b9"></i>
<i class="b" style="left:42.0px;top:509.5px;width:21.0px;height:11.5px;background:repeating-linear-gradient(#aaa 0 1px,transparent 1px 4.5px)"></i>
<i class="b" style="left:64.0px;top:578.0px;width:27.0px;height:15.0px;background:linear-gradient(90deg,#c9423a,#3a8a4a 30%,#d6b13a 55%,#444 75%,#c9423a)"></i>
<i class="b" style="left:41.0px;top:586.0px;width:11.0px;height:12.0px;background:#f1c7a8;border-radius:4px"></i>
<i class="b" style="left:94.0px;top:586.0px;width:11.0px;height:12.0px;background:#f1c7a8;border-radius:4px"></i>
<i class="b" style="left:87.0px;top:647.0px;width:22.0px;height:23.0px;background:linear-gradient(#e9a05c,#7c3a20)"></i>
<i class="b" style="left:41.0px;top:646.0px;width:43.0px;height:24.0px;background:repeating-linear-gradient(#777 0 1.2px,transparent 1.2px 4.5px)"></i>
<i class="b" style="left:1127.0px;top:193.0px;width:22.0px;height:464.0px;background:#cfcfcf"></i>
<i class="b" style="left:1127.0px;top:193.0px;width:22.0px;height:21.0px;background:#fdfdfd;border:1px solid #d0d0d0"></i>
<i class="b" style="left:1127.5px;top:214.0px;width:21.0px;height:22.0px;background:#fefefe;border:1px solid #cacaca"></i>
<i class="b" style="left:1127.0px;top:565.0px;width:22.0px;height:21.0px;background:#fdfdfd;border:1px solid #d0d0d0"></i>
<i class="b" style="left:1127.0px;top:586.0px;width:22.0px;height:71.0px;background:#e9e9e9"></i>
<svg class="b" style="left:1133.0px;top:200.0px;" width="10.0" height="6.0" viewBox="0 0 10 6"><path d="M0 6l5-6 5 6z" fill="#777"/></svg>
<svg class="b" style="left:1133.0px;top:572.0px;" width="10.0" height="6.0" viewBox="0 0 10 6"><path d="M0 0l5 6 5-6z" fill="#777"/></svg>
<svg class="b" style="left:1133.0px;top:592.0px;" width="10.0" height="11.0" viewBox="0 0 10 11"><path d="M0 5l5-5 5 5zM0 10l5-5 5 5z" fill="#666"/></svg>
<svg class="b" style="left:1133.0px;top:614.0px;" width="10.0" height="11.0" viewBox="0 0 10 11"><path d="M0 1l5 5 5-5zM0 6l5 5 5-5z" fill="#666"/></svg>
<svg class="b" style="left:249.0px;top:200.5px;box-shadow:0 0 2px rgba(0,0,0,.25);" width="792.5" height="444.0" viewBox="0 0 792 444"><use href="#slideart"/></svg>
<span class="t" style="left:786.5px;top:228.6px;font-size:22px;font-weight:bold;letter-spacing:.43px;color:#0a1206;-webkit-text-stroke:.45px #0a1206">CURSO GESTÃO</span>
<span class="t" style="left:786.5px;top:256.4px;font-size:22px;font-weight:bold;letter-spacing:.43px;color:#0a1206;-webkit-text-stroke:.45px #0a1206">DE OUVIDORIA –</span>
<span class="t" style="left:786.5px;top:284.0px;font-size:22px;font-weight:bold;letter-spacing:.43px;color:#0a1206;-webkit-text-stroke:.45px #0a1206">TURMA EXCLUSIVA</span>
<span class="t" style="left:786.5px;top:311.2px;font-size:22px;font-weight:bold;letter-spacing:.43px;color:#0a1206;-webkit-text-stroke:.45px #0a1206">SEDUC-CE</span>
<span class="t" style="left:786.5px;top:393.4px;font-size:22px;font-weight:bold;letter-spacing:.43px;color:#0a1206;-webkit-text-stroke:.45px #0a1206">MÓDULO I –</span>
<span class="t" style="left:786.5px;top:421.0px;font-size:22px;font-weight:bold;letter-spacing:.43px;color:#0a1206;-webkit-text-stroke:.45px #0a1206">OUVIDORIA COMO</span>
<span class="t" style="left:786.5px;top:448.4px;font-size:22px;font-weight:bold;letter-spacing:.43px;color:#0a1206;-webkit-text-stroke:.45px #0a1206">INSTRUMENTO DE</span>
<span class="t" style="left:786.5px;top:475.8px;font-size:22px;font-weight:bold;letter-spacing:.43px;color:#0a1206;-webkit-text-stroke:.45px #0a1206">CIDADANIA</span>
<span class="t" style="left:786.5px;top:559.4px;font-size:22px;font-weight:bold;letter-spacing:.3px;color:#ea2010;-webkit-text-stroke:.4px #ea2010">AULA 1 – Dia</span>
<span class="t" style="left:786.5px;top:586.2px;font-size:22px;font-weight:bold;letter-spacing:.3px;color:#ea2010;-webkit-text-stroke:.4px #ea2010">12/05/2025</span>
<i class="b" style="left:164.0px;top:657.5px;width:985.0px;height:1.0px;background:#d0d0d0"></i>
<span class="t" style="left:177.0px;top:668.1px;font-size:18.5px;letter-spacing:0.26px;color:#555;">Clique para adicionar anotações</span>
<i class="b" style="left:0.0px;top:700.0px;width:1149.0px;height:29.0px;background:#f1f1f1;border-top:1px solid #dcdcdc"></i>
<span class="t" style="left:6.5px;top:707.8px;font-size:13.2px;letter-spacing:0.07px;color:#555;">Slide 1 de 81</span>
<svg class="b" style="left:104.0px;top:706.0px;" width="20.0" height="17.0" viewBox="0 0 20 17"><path d="M1 2h7l1 1.500V15l-1-1H1zM9 3.500L10 2h4M9 15l1-1h7V9" fill="none" stroke="#777" stroke-width="1.200"/><path d="M12 10l6-7 1.500 1.500-6 7-2 .7z" fill="#666"/></svg>
<span class="t" style="left:139.0px;top:707.8px;font-size:13.2px;letter-spacing:0.02px;color:#555;">Inglês (Estados Unidos)</span>
<svg class="b" style="left:507.0px;top:706.0px;" width="16.0" height="16.0" viewBox="0 0 16 16"><path d="M8 1l3.500 4h-7zM1 8.500h14M1 11.500h14M1 14.500h10" stroke="#777" stroke-width="1.200" fill="#777"/></svg>
<span class="t" style="left:528.5px;top:707.8px;font-size:13.2px;letter-spacing:0.01px;color:#555;">Anotações</span>
<svg class="b" style="left:610.0px;top:706.0px;" width="18.0" height="17.0" viewBox="0 0 18 17"><path d="M1 1h16v10H8l-4 5v-5H1z" fill="#666"/></svg>
<span class="t" style="left:632.0px;top:707.8px;font-size:13.2px;letter-spacing:0.29px;color:#555;">Comentários</span>
<i class="b" style="left:730.0px;top:701.0px;width:39.5px;height:28.0px;background:#cbcbcb"></i>
<svg class="b" style="left:740.5px;top:706.5px;" width="18.5" height="16.5" viewBox="0 0 18.500 16.500"><rect x=".7" y=".7" width="17" height="15" fill="none" stroke="#666" stroke-width="1.400"/><path d="M5.500 .7v15M5.500 11h12" stroke="#666" stroke-width="1.300"/><rect x="8.500" y="3.500" width="6" height="4.500" fill="none" stroke="#666" stroke-width="1.200"/></svg>
<svg class="b" style="left:781.0px;top:706.5px;" width="17.5" height="16.5" viewBox="0 0 17.500 16.500"><g fill="none" stroke="#777" stroke-width="1.300"><rect x=".7" y=".7" width="6.500" height="6"/><rect x="10.300" y=".7" width="6.500" height="6"/><rect x=".7" y="9.800" width="6.500" height="6"/><rect x="10.300" y="9.800" width="6.500" height="6"/></g></svg>
<svg class="b" style="left:820.0px;top:706.5px;" width="18.0" height="16.5" viewBox="0 0 18 16.500"><path d="M9 2.500C7 1 3 1 1 1.500v13c2-.5 6-.5 8 1 2-1.500 6-1.500 8-1V1.500C15 1 11 1 9 2.500zM9 2.500v13" fill="none" stroke="#777" stroke-width="1.300"/><path d="M3 5h4M3 8h4M3 11h4M11 5h4M11 8h4M11 11h4" stroke="#888" stroke-width="1"/></svg>
<svg class="b" style="left:859.5px;top:706.0px;" width="18.5" height="18.0" viewBox="0 0 18.500 18"><path d="M0 1h18.500" stroke="#777" stroke-width="1.600"/><rect x="2" y="1.500" width="14.500" height="9" fill="none" stroke="#777" stroke-width="1.300"/><path d="M9.200 10.500v6M5 17h8.500" stroke="#777" stroke-width="1.300"/></svg>
<i class="b" style="left:893.5px;top:714.0px;width:9.5px;height:2.0px;background:#555"></i>
<i class="b" style="left:908.5px;top:714.5px;width:131.5px;height:1.0px;background:#bdbdbd"></i>
<i class="b" style="left:974.0px;top:712.0px;width:1.0px;height:6.0px;background:#bdbdbd"></i>
<i class="b" style="left:934.5px;top:708.0px;width:5.0px;height:14.0px;background:#555"></i>
<i class="b" style="left:1045.0px;top:714.0px;width:11.5px;height:2.0px;background:#555"></i>
<i class="b" style="left:1049.8px;top:709.2px;width:2.0px;height:11.6px;background:#555"></i>
<span class="t" style="left:1070.5px;top:707.3px;font-size:13.2px;letter-spacing:0.19px;color:#555;">47%</span>
<svg class="b" style="left:1112.5px;top:707.0px;" width="16.5" height="16.5" viewBox="0 0 16.500 16.500"><rect x=".7" y=".7" width="15" height="15" fill="none" stroke="#777" stroke-width="1.300"/><path d="M3.500 6.500v-3h3M10 3.500h3v3M13 10v3h-3M6.500 13h-3v-3" fill="none" stroke="#666" stroke-width="1.300"/></svg>
<svg class="b" style="left:349.5px;top:374.5px;" width="76.5" height="34.5" viewBox="0 0 75.500 34.500"><g fill="none" stroke="#3fa873" stroke-width="1.100"><path d="M2 33c0-6 1-9 4-11 2-1 3-2 2.500-4C6 15 6 9 10 7c5-2 9 2 8 7-.5 3-2 4-1 6 2 1 5 2 7 4"/><path d="M17 24c1-3 3-4 5-5 1-1 .5-2-.5-4-2-5 1-10 6-10s8 5 6 10c-1 2-1.500 3-.5 4 2 1 4 2 5 4"/><path d="M36 22c1-2 3-3 5-4 1-1 0-2-1-4-2-6 2-11 7-11s9 5 7 11c-1 2-2 3-1 4 3 1 5 3 6 6"/><path d="M55 20c1-1 2-2 3-3 1-1 0-2-.5-4-1-5 2-9 6-9s7 4 6 9c-.5 2-1 3 0 4 3 2 5 5 5 12v4"/></g></svg>
<span class="t" style="left:362.5px;top:400.7px;font-size:5.6px;letter-spacing:-0.13px;color:#3fa873;font-weight:bold;">Escola de</span>
<span class="t" style="left:351.0px;top:406.7px;font-size:12.5px;letter-spacing:-0.99px;color:#343a36;font-weight:bold;">Gestão Pública</span>
<span class="t" style="left:368.0px;top:419.5px;font-size:5.8px;letter-spacing:0.03px;color:#4fae80;font-weight:bold;">do Estado do Ceará</span>
<svg class="b" style="left:471.5px;top:365.5px;" width="43.0" height="59.0" viewBox="0 0 43 59"><path d="M9 1h25v4l-1.500 1v5h-22V6L9 5z" fill="#b89558"/><path d="M11 6h21" stroke="#8a6a34" stroke-width="1.200"/><path d="M13 1v3M17 1v3M21.500 1v3M26 1v3M30 1v3" stroke="#f4ead4" stroke-width="1.300"/><path d="M3 14c6-2 12-3 18.500-3s12.500 1 18.500 3c2 16-2 32-18.500 43C5 46 1 30 3 14z" fill="#fff" stroke="#d9e6d9" stroke-width=".8"/><path d="M5.500 16c5-1.700 10.500-2.500 16-2.500s11 .8 16 2.500c1.500 14-2 28-16 37.500C7.500 44 4 30 5.500 16z" fill="#2f9a4c"/><circle cx="21.500" cy="30" r="10.500" fill="#e9efe4"/><path d="M21.500 19.500a10.500 10.500 0 0 1 10.500 10.500H21.500z" fill="#e8d9a0"/><path d="M11 30h10.500v10.500A10.500 10.500 0 0 1 11 30z" fill="#7fc0d9"/><path d="M21.500 30H32a10.500 10.500 0 0 1-10.500 10.500z" fill="#c9a878"/><path d="M13 22l6 8h-7z" fill="#6a9a5a"/><ellipse cx="26" cy="35" rx="2.500" ry="3.500" fill="#4a6a3a"/><g fill="#f4f4e0"><circle cx="9" cy="38" r="1"/><circle cx="12" cy="44" r="1"/><circle cx="17" cy="48.500" r="1"/><circle cx="26" cy="48.500" r="1"/><circle cx="31" cy="44" r="1"/><circle cx="34" cy="38" r="1"/></g></svg>
<span class="t" style="left:523.2px;top:374.1px;font-size:31.500px;font-weight:bold;letter-spacing:2.600px;color:#3b4f57;-webkit-text-stroke:1.500px #3b4f57;transform-origin:0 0;transform:scaleX(1.075)">CEARÁ</span>
<span class="t" style="left:524.5px;top:404.8px;font-size:9.7px;letter-spacing:1.30px;color:#3b4f57;font-weight:bold;">GOVERNO DO ESTADO</span>
<span class="t" style="left:525.0px;top:419.7px;font-size:5.4px;letter-spacing:0.74px;color:#98a1a3;">SECRETARIA DO</span>
<span class="t" style="left:525.0px;top:427.5px;font-size:5.4px;letter-spacing:0.83px;color:#3a4346;font-weight:bold;">PLANEJAMENTO E GESTÃO</span>
</div>

<div class="b" style="left:1177px;top:59.800px;width:411px;height:231.400px;border-radius:12px;background:#a8c7fa"></div><div class="b" style="left:1180px;top:62.800px;width:405px;height:225.400px;border-radius:9px;overflow:hidden;background:#9fa49f"><svg class="b" style="left:0;top:0" width="405" height="225.400" viewBox="0 0 405 225" preserveAspectRatio="none"><g filter="url(#bl08)">
<rect width="405" height="225" fill="#9fa49f"/>
<linearGradient id="mceil" x1="0" y1="0" x2="0" y2="1"><stop offset="0" stop-color="#979d9a"/><stop offset="1" stop-color="#8e9592"/></linearGradient>
<rect x="198" y="0" width="207" height="120" fill="url(#mceil)"/>
<path d="M0 0H94L84 60 0 29z" fill="#c2bfab"/>
<path d="M94 0H204V8L84 60z" fill="#b1ae9b"/>
<linearGradient id="mgl" x1="0" y1="0" x2="0" y2="1"><stop offset="0" stop-color="#999c90"/><stop offset=".4" stop-color="#a2a69d"/><stop offset=".55" stop-color="#bcc0ba"/><stop offset="1" stop-color="#c9ccc6"/></linearGradient>
<path d="M0 29L84 60 74 190H0z" fill="url(#mgl)"/>
<path d="M0 44H14L16 100 0 104z" fill="#b3b1a2"/>
<linearGradient id="mgc" x1="0" y1="0" x2="0" y2="1"><stop offset="0" stop-color="#979c97"/><stop offset=".42" stop-color="#9da19a"/><stop offset=".5" stop-color="#aba998"/><stop offset=".72" stop-color="#a9a897"/><stop offset=".8" stop-color="#bdc1b9"/><stop offset="1" stop-color="#c6c9c2"/></linearGradient>
<path d="M86 62L204 10V190H74z" fill="url(#mgc)"/>
<path d="M80 59l8 3-12 128h-8z" fill="#c6c9c6"/>
<path d="M96 120l-2 70h5l3-70z" fill="#c0c3bf"/>
<path d="M84 60L204 9" stroke="#c3c5bf" stroke-width="3"/>
<path d="M0 29L84 60" stroke="#c6c7bf" stroke-width="2.500"/>
<path d="M10 98L76 110M76 110L200 140" stroke="#c2c5c0" stroke-width="1.500" opacity=".8"/>
<rect x="0" y="187" width="110" height="38" fill="#b8b6a4"/>
<rect x="0" y="185" width="110" height="4" fill="#cbccc6"/>
<path d="M64 189h7v36h-7z" fill="#a9a896"/>
<rect x="24" y="163" width="26" height="8" fill="#d0d2cc" opacity=".8"/>
<g stroke="#fff" stroke-linecap="round" filter="url(#bl1)">
<path d="M139 58L206 38" stroke-width="6"/>
<path d="M14 100L74 83" stroke-width="5" opacity=".9"/>
<path d="M20 108L44 104" stroke-width="4.500"/>
<path d="M0 112L8 111" stroke-width="4"/>
<path d="M46 138L70 131" stroke-width="3.500" opacity=".9"/>
<path d="M42 146L64 141" stroke-width="3.500" opacity=".9"/>
<path d="M6 144L24 140M10 152L26 149" stroke-width="3" opacity=".8"/>
<path d="M86 120L118 111" stroke-width="3" opacity=".85"/>
<path d="M96 127L112 124" stroke-width="4"/>
<path d="M104 150L128 146" stroke-width="2.500" opacity=".7"/>
<path d="M200 40L297 1" stroke-width="6"/>
<path d="M288 61L332 49" stroke-width="4.500"/>
<path d="M366 52L404 43" stroke-width="4" opacity=".85"/>
</g>
<rect x="374" y="61" width="31" height="21" fill="#7f8580"/><rect x="377" y="65" width="26" height="13" fill="#a4a9a4"/>
<rect x="300" y="82" width="105" height="38" fill="#b4b9b5"/>
<path d="M300 92h105M300 104h105" stroke="#9da39f" stroke-width="2"/>
<rect x="312" y="118" width="93" height="44" fill="#d2c9ac"/>
<rect x="340" y="120" width="40" height="26" fill="#e4d9ae"/>
<path d="M312 132h93M312 147h93M334 118v44M356 118v44M380 118v44" stroke="#b4ad98" stroke-width="1.500"/>
<rect x="318" y="160" width="87" height="16" fill="#e6e6e0"/>
<path d="M318 168h87" stroke="#c3c3ba" stroke-width="2"/>
<rect x="330" y="177" width="75" height="48" fill="#c7c4b0"/>
<rect x="296" y="120" width="18" height="60" fill="#a9ada7"/>
</g>
<g filter="url(#bl1)">
<path d="M82 225C88 190 98 165 116 156 140 147 175 145 206 139L276 154C300 160 322 170 338 186 350 200 356 214 358 225z" fill="#402539"/>
<path d="M118 160c20-8 50-12 80-15l-6 20c-30 4-55 10-80 30z" fill="#4f3048" opacity=".7"/>
<path d="M290 162c20 6 38 18 50 36l-22 4c-8-14-20-26-34-30z" fill="#50314a" opacity=".6"/>
<path d="M212 132h60l-6 44-28 32-18-30z" fill="#a47a64"/>
<path d="M206 138c4 24 14 50 30 70l-20 17h-40c6-30 14-60 30-87z" fill="#3a2134"/>
<path d="M276 152c-8 24-22 42-40 56l14 17h40c4-26 0-52-14-73z" fill="#3b2235"/>
<path d="M206 138c6 26 16 50 30 70" fill="none" stroke="#28141f" stroke-width="3"/>
<path d="M276 152c-8 24-22 42-40 56" fill="none" stroke="#28141f" stroke-width="3"/>
<ellipse cx="240" cy="74" rx="50" ry="52" fill="#2b2422"/><ellipse cx="240" cy="40" rx="30" ry="14" fill="#6a5548" opacity=".7"/>
<ellipse cx="192" cy="100" rx="6" ry="17" fill="#a67c66"/>
<ellipse cx="289" cy="102" rx="5" ry="17" fill="#a0755f"/>
<path d="M196 88c0-40 18-58 44-58s46 18 46 58c0 34-14 78-46 78s-44-44-44-78z" fill="#b48e76"/>
<ellipse cx="238" cy="54" rx="36" ry="22" fill="#c9a891" opacity=".9"/><path d="M196 88c0-20 4-34 12-44-2 30-2 70 14 110-18-14-26-44-26-66z" fill="#8f6a58" opacity=".45"/>
<clipPath id="mface"><path d="M196 88c0-40 18-58 44-58s46 18 46 58c0 34-14 78-46 78s-44-44-44-78z"/></clipPath><g clip-path="url(#mface)"><ellipse cx="240" cy="150" rx="40" ry="24" fill="#6e5448" opacity=".6"/><ellipse cx="240" cy="133" rx="15" ry="9" fill="#b48e76" opacity=".55"/></g>
<ellipse cx="239" cy="120" rx="16" ry="6" fill="#8a6a5a" opacity=".55"/>
<path d="M223 131c10-3 22-3 33 0-8 6-24 6-33 0z" fill="#8d5c54"/>
<path d="M236 84c-3 14-7 24-8 30 4 5 16 5 20 0-2-8-5-18-6-30z" fill="#b98f78" opacity=".8"/>
<ellipse cx="221" cy="91" rx="5" ry="3" fill="#2a2020"/><ellipse cx="264" cy="93" rx="5" ry="3" fill="#2a2020"/>
<path d="M208 80c8-4 18-4 26-1M252 80c10-3 20-2 28 3" stroke="#3a2a26" stroke-width="3" fill="none"/>
</g>
<g fill="rgba(200,205,205,.18)" stroke="#2b2c30" stroke-width="2.300">
<rect x="203" y="78" width="37" height="27" rx="7"/><rect x="250" y="80" width="37" height="28" rx="7"/>
</g>
<path d="M240 88q5-3 10 0M203 84l-8-2M287 86l5 0" stroke="#2b2c30" stroke-width="2" fill="none"/>
<path d="M199 118c4 40 14 80 34 107" stroke="#1d1416" stroke-width="1.200" fill="none"/>
<path d="M290 118c-2 30-14 60-24 70-8 10-18 24-22 37" stroke="#1d1416" stroke-width="1.100" fill="none"/>
<path d="M199 108v16M290 108v14" stroke="#ddd" stroke-width="1.500"/>
</svg><svg class="b" style="left:10.0px;top:203.5px;" width="10.0" height="17.5" viewBox="0 0 10 17.500"><path d="M2.500 1h5v1.500l-1 .8v5l2.500 2.200v1.500H1v-1.500l2.500-2.200v-5l-1-.8zM5 12v5" fill="#fff" stroke="#fff" stroke-width="1"/></svg><span class="t" style="left:31.3px;top:204.9px;font-size:12.6px;letter-spacing:0.07px;color:#fff;font-weight:bold;text-shadow:0 0 2px rgba(0,0,0,.5);">Samuel Colares</span><i class="b" style="left:380.800px;top:3.300px;width:20.400px;height:20.400px;border-radius:50%;background:#a8c7fa"></i><i class="b" style="left:384.8px;top:11.900px;width:3.200px;height:3.200px;border-radius:50%;background:#062e6f"></i><i class="b" style="left:389.4px;top:11.900px;width:3.200px;height:3.200px;border-radius:50%;background:#062e6f"></i><i class="b" style="left:394.0px;top:11.900px;width:3.200px;height:3.200px;border-radius:50%;background:#062e6f"></i></div>
<div class="tile" style="left:1203px;top:304px;width:173.6px;height:98px;border-radius:9px;"><svg class="b" style="left:0;top:0" width="173.6" height="98" viewBox="0 0 173.6 98" preserveAspectRatio="none"><g filter="url(#bl08)"><rect width="174" height="98" fill="#ecece9"/>
<rect x="0" y="0" width="36" height="98" fill="#e4e5e4"/>
<rect x="36" y="13" width="125" height="85" fill="#efefec"/>
<path d="M36 13h125" stroke="#dcdcd6" stroke-width="1.500"/>
<path d="M93 13v40M63 20v60M128 20v40" stroke="#d9d9d3" stroke-width="1.200"/>
<path d="M60 28v12M68 28v12M122 26v14M131 26v14" stroke="#b9b9b2" stroke-width="1.200"/>
<rect x="40" y="0" width="30" height="12" fill="#f3e2cf" opacity=".7"/>
<rect x="160" y="0" width="14" height="98" fill="#eadfe0"/>
<rect x="159" y="55" width="6" height="43" fill="#3b3a3c"/>
<rect x="9" y="24" width="11" height="26" fill="#86b488"/>
<rect x="20" y="46" width="16" height="27" fill="#5e9b63"/>
<rect x="29" y="58" width="7" height="12" fill="#3f4a42"/>
<rect x="1" y="50" width="17" height="22" fill="#e6eef0"/>
<path d="M1 54h17" stroke="#9cc0d8" stroke-width="2"/>
<rect x="0" y="73" width="38" height="25" fill="#f1f1ef"/>
</g>
<g filter="url(#bl1)">
<path d="M62 76h72v12H62z" fill="#1f2024"/>
<ellipse cx="96" cy="56" rx="24" ry="24" fill="#2a2528"/>
<path d="M72 56c-4 10-3 20 4 26h44c6-8 6-18 2-26z" fill="#2a2528"/>
<path d="M41 98c2-12 10-20 24-23l22-4h22l20 5c10 3 14 10 15 22z" fill="#3b4060"/>
<path d="M86 70h24l-4 18-8 6-8-6z" fill="#bd8270"/>
<ellipse cx="97" cy="57" rx="13" ry="19" fill="#c88d7a"/>
<ellipse cx="97" cy="44" rx="10" ry="6" fill="#d6a08c" opacity=".8"/>
<path d="M85 50h10v6h-9zM99 50h10l-1 6h-9z" fill="#6a4a78" opacity=".75"/>
<path d="M92 64q5 2 10 0" stroke="#a8505a" stroke-width="2" fill="none"/>
<ellipse cx="77" cy="58" rx="3" ry="5" fill="#e4e2e0"/>
<path d="M104 65l6 1" stroke="#8a2a2a" stroke-width="2"/>
<path d="M84 84l4 14M110 84l-5 14" stroke="#5f9a5a" stroke-width="1.300" opacity=".8"/>
</g></svg><span class="t" style="left:8.8px;top:80.8px;font-size:10px;letter-spacing:-0.38px;color:#fff;font-weight:bold;text-shadow:0 0 2px rgba(0,0,0,.55);">ELISABETE DE ALMEIDA GO...</span><i class="b" style="left:146.6px;top:7.200px;width:20px;height:20px;border-radius:50%;background:rgba(52,54,56,.92)"></i><svg class="b" style="left:150.1px;top:10.500px" width="13" height="13.500" viewBox="0 0 13 13.500"><rect x="4.600" y="1" width="3.800" height="6.800" rx="1.900" fill="#e8e8e8"/><path d="M2.500 6.500a4 4 0 0 0 8 0M6.500 10.500v2" fill="none" stroke="#e8e8e8" stroke-width="1.100"/><path d="M1.500 1.500l10.500 11" stroke="rgba(52,54,56,.92)" stroke-width="2.600"/><path d="M1.500 1.500l10.500 11" stroke="#e8e8e8" stroke-width="1.100"/></svg></div>
<div class="tile" style="left:1387px;top:304px;width:174px;height:98px;border-radius:9px;"><svg class="b" style="left:0;top:0" width="174" height="98" viewBox="0 0 174 98" preserveAspectRatio="none"><radialGradient id="ol" cx=".3" cy=".45" r=".9"><stop offset="0" stop-color="#8f4e26"/><stop offset=".5" stop-color="#7a401f"/><stop offset="1" stop-color="#48220e"/></radialGradient>
<rect width="174" height="98" fill="url(#ol)"/>
<g filter="url(#bl08)"><clipPath id="olc"><circle cx="87" cy="49" r="20"/></clipPath>
<g clip-path="url(#olc)"><rect x="60" y="25" width="60" height="50" fill="#3a3432"/>
<rect x="66" y="28" width="30" height="14" fill="#5a4a44"/>
<ellipse cx="79" cy="44" rx="7" ry="8" fill="#d9a890"/><path d="M70 40c2-8 14-9 18-2l-2 4c-4-3-10-3-14 1z" fill="#5a3a2a"/>
<path d="M64 72c2-14 8-19 16-19s12 5 13 19z" fill="#d8c4ae"/>
<ellipse cx="96" cy="45" rx="7" ry="8.500" fill="#c99880"/><path d="M89 40c2-7 13-7 15 0-5-2-10-2-15 0z" fill="#b8b4b0"/>
<path d="M84 72c1-14 6-18 13-18s12 5 13 18z" fill="#25262a"/>
</g></g></svg><span class="t" style="left:8.8px;top:80.8px;font-size:10px;letter-spacing:-0.02px;color:#fff;font-weight:bold;text-shadow:0 0 2px rgba(0,0,0,.55);">Olena Marta</span><i class="b" style="left:147px;top:7.200px;width:20px;height:20px;border-radius:50%;background:#5a2410"></i><svg class="b" style="left:150.5px;top:10.500px" width="13" height="13.500" viewBox="0 0 13 13.500"><rect x="4.600" y="1" width="3.800" height="6.800" rx="1.900" fill="#f0b0a0"/><path d="M2.500 6.500a4 4 0 0 0 8 0M6.500 10.500v2" fill="none" stroke="#f0b0a0" stroke-width="1.100"/><path d="M1.500 1.500l10.500 11" stroke="#5a2410" stroke-width="2.600"/><path d="M1.500 1.500l10.500 11" stroke="#f0b0a0" stroke-width="1.100"/></svg></div>
<div class="tile" style="left:1203px;top:412px;width:173.6px;height:98px;border-radius:9px;"><svg class="b" style="left:0;top:0" width="173.6" height="98" viewBox="0 0 173.6 98" preserveAspectRatio="none"><g filter="url(#bl08)"><rect width="174" height="98" fill="#ebe6dc"/>
<rect x="0" y="23" width="174" height="4.500" fill="#d9b68e"/><rect x="0" y="47.500" width="174" height="4.500" fill="#d9b68e"/><rect x="0" y="72" width="174" height="4.500" fill="#d6b189"/>
<rect x="0" y="94" width="174" height="4" fill="#d6b189"/>
<g>
<rect x="2" y="5" width="9" height="18" fill="#b9a999"/><rect x="20" y="8" width="8" height="15" fill="#4d7a7c"/><rect x="28" y="5" width="6" height="18" fill="#d8a25a"/><rect x="34" y="9" width="6" height="14" fill="#5a7f9a"/>
<rect x="46" y="4" width="5" height="19" fill="#47586a"/><rect x="51" y="4" width="5" height="19" fill="#8a8f94"/><rect x="56" y="4" width="4" height="19" fill="#3f5664"/><rect x="60" y="5" width="6" height="18" fill="#c9c3b6"/><rect x="66" y="4" width="5" height="19" fill="#5f6f7c"/><rect x="74" y="8" width="8" height="15" fill="#c8bfb0"/>
<rect x="104" y="7" width="8" height="16" fill="#d6d0c4"/><rect x="122" y="8" width="8" height="15" fill="#cfc9bc"/><rect x="130" y="6" width="6" height="17" fill="#3f5a70"/><rect x="136" y="5" width="6" height="18" fill="#2f5068"/><rect x="142" y="6" width="5" height="17" fill="#4f6a7c"/><rect x="160" y="9" width="12" height="12" fill="#8a7a5a"/>
<rect x="1" y="34" width="6" height="14" fill="#7a5a44"/><rect x="8" y="32" width="5" height="16" fill="#47607c"/><rect x="15" y="37" width="16" height="10" fill="#b9a595"/><rect x="42" y="33" width="5" height="15" fill="#c8a48a"/><rect x="47" y="33" width="5" height="15" fill="#4a6a8a"/><rect x="52" y="34" width="5" height="14" fill="#3a587a"/>
<rect x="116" y="33" width="5" height="15" fill="#b4443a"/><rect x="121" y="34" width="5" height="14" fill="#a43a32"/><rect x="126" y="34" width="6" height="14" fill="#c8584a"/><rect x="140" y="31" width="10" height="17" rx="3" fill="#f2f2f0"/><rect x="156" y="42" width="18" height="5" fill="#d9d9d4"/><rect x="158" y="39" width="16" height="3" fill="#3a4a5a"/>
<rect x="1" y="57" width="10" height="15" fill="#d9d4c8"/><rect x="12" y="56" width="7" height="16" rx="2" fill="#f0f0ee"/><rect x="22" y="60" width="8" height="12" fill="#e4e4e0"/><circle cx="41" cy="66" r="5" fill="#f4f4f2"/><circle cx="41" cy="66" r="2" fill="#8a8a88"/>
<rect x="118" y="56" width="6" height="16" fill="#d8d0c0"/><rect x="124" y="56" width="6" height="16" fill="#c8bba5"/><rect x="131" y="58" width="9" height="14" fill="#8fb0a5"/><rect x="142" y="56" width="7" height="16" fill="#d5cfc3"/><rect x="156" y="56" width="6" height="16" fill="#5f8f64"/><rect x="162" y="56" width="6" height="16" fill="#b4693a"/>
<rect x="2" y="80" width="24" height="13" fill="#a98a6a"/><rect x="130" y="83" width="22" height="11" fill="#d8ceb8"/><rect x="152" y="84" width="22" height="10" fill="#efe9dc"/>
</g></g>
<g filter="url(#bl1)">
<path d="M50 80c-4-20 4-36 14-48 10-14 36-16 46-2 10 12 12 32 14 48-6 8-16 6-22 0H64c-6 4-10 4-14 2z" fill="#5a3a2a"/>
<path d="M56 70c-2-14 2-26 8-34M116 60c2 8 2 14 6 20" stroke="#7a5238" stroke-width="5" fill="none" opacity=".7"/>
<path d="M41 98c2-14 8-22 22-26h46c12 4 17 12 18 26z" fill="#26332c"/>
<path d="M86 66h22l-2 18-8 14-10-14z" fill="#c08a72"/>
<ellipse cx="98" cy="50" rx="14" ry="19" fill="#cb957c"/>
<path d="M84 42c4-10 22-12 28 0-8-4-20-4-28 0z" fill="#5a3a2a"/>
<path d="M85 47h11v7H85zM101 47h11v7h-11z" fill="none" stroke="#b88a80" stroke-width="1.300"/>
<path d="M93 62q5 2 10 0" stroke="#a04a4a" stroke-width="2" fill="none"/>
</g></svg><span class="t" style="left:8.8px;top:80.8px;font-size:10px;letter-spacing:-0.03px;color:#fff;font-weight:bold;text-shadow:0 0 2px rgba(0,0,0,.55);">Sandra Marinho</span><i class="b" style="left:146.6px;top:7.200px;width:20px;height:20px;border-radius:50%;background:rgba(52,54,56,.92)"></i><svg class="b" style="left:150.1px;top:10.500px" width="13" height="13.500" viewBox="0 0 13 13.500"><rect x="4.600" y="1" width="3.800" height="6.800" rx="1.900" fill="#e8e8e8"/><path d="M2.500 6.500a4 4 0 0 0 8 0M6.500 10.500v2" fill="none" stroke="#e8e8e8" stroke-width="1.100"/><path d="M1.500 1.500l10.500 11" stroke="rgba(52,54,56,.92)" stroke-width="2.600"/><path d="M1.500 1.500l10.500 11" stroke="#e8e8e8" stroke-width="1.100"/></svg></div>
<div class="tile" style="left:1387px;top:412px;width:174px;height:98px;border-radius:9px;"><svg class="b" style="left:0;top:0" width="174" height="98" viewBox="0 0 174 98" preserveAspectRatio="none"><rect width="174" height="98" fill="#3c4043"/>
<g filter="url(#bl08)"><clipPath id="cac"><rect x="55.300" y="0" width="62.700" height="98"/></clipPath><g clip-path="url(#cac)">
<rect x="50" y="0" width="74" height="98" fill="#cfd2cd"/>
<rect x="50" y="0" width="74" height="20" fill="#e2e3df"/>
<path d="M62 21h50" stroke="#fff" stroke-width="3"/>
<rect x="55" y="34" width="16" height="40" fill="#c2cbc0"/><rect x="100" y="40" width="20" height="30" fill="#d9dcd4"/>
<rect x="57" y="60" width="14" height="22" fill="#5a5f5c"/><rect x="104" y="58" width="14" height="8" fill="#7fa07f"/>
<path d="M55 98c2-14 8-22 18-26h28c10 3 16 12 17 26z" fill="#e9e7e4"/>
<path d="M78 98l6-10h12l5 10z" fill="#c53434"/>
<path d="M77 64h20l-1 14-9 10-9-10z" fill="#c0937f"/>
<ellipse cx="86.500" cy="48" rx="15.500" ry="21" fill="#c79c88"/>
<path d="M71 40c2-16 30-16 32 0-8-6-24-6-32 0z" fill="#d5d2ce"/>
<path d="M72 36h13v8H73zM89 36h13l-1 8H89z" fill="rgba(80,80,80,.25)" stroke="#4a4a4a" stroke-width="1.300"/>
<path d="M81 60q6 2 11 0" stroke="#9a6a5c" stroke-width="1.500" fill="none"/>
</g></g></svg><span class="t" style="left:8.8px;top:80.8px;font-size:10px;letter-spacing:-0.14px;color:#fff;font-weight:bold;text-shadow:0 0 2px rgba(0,0,0,.55);">Carlos Roberto Lima</span><i class="b" style="left:147px;top:7.200px;width:20px;height:20px;border-radius:50%;background:rgba(60,64,67,.0)"></i><svg class="b" style="left:150.5px;top:10.500px" width="13" height="13.500" viewBox="0 0 13 13.500"><rect x="4.600" y="1" width="3.800" height="6.800" rx="1.900" fill="#d8d8d8"/><path d="M2.500 6.500a4 4 0 0 0 8 0M6.500 10.500v2" fill="none" stroke="#d8d8d8" stroke-width="1.100"/><path d="M1.500 1.500l10.500 11" stroke="rgba(60,64,67,.0)" stroke-width="2.600"/><path d="M1.500 1.500l10.500 11" stroke="#d8d8d8" stroke-width="1.100"/></svg></div>
<div class="tile" style="left:1203px;top:520px;width:173.6px;height:98px;border-radius:9px;"><svg class="b" style="left:0;top:0" width="173.6" height="98" viewBox="0 0 173.6 98" preserveAspectRatio="none"><g filter="url(#bl08)"><rect width="174" height="98" fill="#cbcbc8"/>
<rect x="0" y="0" width="66" height="64" fill="#f5f5f4"/>
<rect x="0" y="50" width="66" height="16" fill="#e5e5e2"/>
<path d="M66 0v64" stroke="#dcdcd8" stroke-width="3"/>
<rect x="0" y="64" width="60" height="34" fill="#c4c4c0"/>
<rect x="66" y="0" width="108" height="98" fill="#cdcdca"/>
<rect x="140" y="0" width="34" height="98" fill="#c6c6c3"/>
</g>
<g filter="url(#bl1)">
<path d="M106 54h30c3 0 4 2 4 5v39h-36z" fill="#1d1d1f"/>
<path d="M27 98c4-16 14-25 34-29l26-3 22 6c10 4 24 14 32 26z" fill="#2a2c36"/>
<g stroke="#dcdcdc" stroke-width="2" opacity=".75" fill="none"><path d="M40 84c20-8 50-10 84 0M34 92c24-8 60-10 100 2M52 76c14-5 40-6 60 0"/></g>
<path d="M74 58h26l2 12-14 6-14-6z" fill="#b8856f"/>
<ellipse cx="95" cy="42" rx="17" ry="20" fill="#2c2624"/>
<path d="M69 36c2-10 10-14 20-13 8 1 14 8 14 20s-6 24-16 25c-8 1-14-4-16-10l-3-2 2-4-3-5z" fill="#c28f7a"/>
<path d="M74 25c8-5 22-4 30 4 4 6 4 14 2 20l-6-4c0-8-4-14-12-16-6-1-10-1-14-4z" fill="#2c2624"/>
<path d="M67 40h16v7H68z" fill="rgba(200,200,210,.35)" stroke="#444" stroke-width="1.200"/><path d="M83 42l14-1" stroke="#444" stroke-width="1.200"/>
</g></svg><span class="t" style="left:8.8px;top:80.8px;font-size:10px;letter-spacing:-0.22px;color:#fff;font-weight:bold;text-shadow:0 0 2px rgba(0,0,0,.55);">MARIA JEANE DE NORONHA</span><i class="b" style="left:146.6px;top:7.200px;width:20px;height:20px;border-radius:50%;background:rgba(52,54,56,.92)"></i><svg class="b" style="left:150.1px;top:10.500px" width="13" height="13.500" viewBox="0 0 13 13.500"><rect x="4.600" y="1" width="3.800" height="6.800" rx="1.900" fill="#e8e8e8"/><path d="M2.500 6.500a4 4 0 0 0 8 0M6.500 10.500v2" fill="none" stroke="#e8e8e8" stroke-width="1.100"/><path d="M1.500 1.500l10.500 11" stroke="rgba(52,54,56,.92)" stroke-width="2.600"/><path d="M1.500 1.500l10.500 11" stroke="#e8e8e8" stroke-width="1.100"/></svg></div>
<div class="tile" style="left:1387px;top:520px;width:174px;height:98px;border-radius:9px;"><svg class="b" style="left:0;top:0" width="174" height="98" viewBox="0 0 174 98" preserveAspectRatio="none"><g filter="url(#bl08)"><rect width="174" height="98" fill="#f1f1ec"/>
<rect x="0" y="0" width="60" height="98" fill="#f6f6f2"/>
<rect x="70" y="0" width="34" height="6" fill="#c9a24a"/>
<rect x="123" y="32" width="15" height="26" fill="#cdb682"/><rect x="126" y="56" width="10" height="12" fill="#d9c79a"/>
<rect x="140" y="40" width="34" height="58" fill="#eef0ea"/>
<rect x="163" y="40" width="9" height="34" fill="#3a3c3a"/><rect x="150" y="54" width="10" height="16" fill="#6a7a5a"/>
<path d="M142 68h32" stroke="#2a2a2a" stroke-width="2.500"/>
<rect x="146" y="72" width="28" height="26" fill="#f4f4f0"/>
</g>
<g filter="url(#bl1)">
<path d="M64 70c-4-24 0-46 12-56 12-10 36-10 46 0 10 10 12 34 8 58-6 6-14 8-20 8H80c-8 0-12-4-16-10z" fill="#1f1a19"/>
<path d="M17 98c4-16 18-26 40-30l26-2h30l22 4c12 3 18 14 19 28z" fill="#2f3450"/>
<path d="M84 64h32l-2 16-14 8-14-8z" fill="#a8745f"/>
<path d="M76 40c0-18 10-28 25-28s25 10 25 28c0 20-9 36-25 36S76 60 76 40z" fill="#bb856e"/>
<ellipse cx="100" cy="26" rx="17" ry="9" fill="#c9957e" opacity=".8"/>
<path d="M80 56c6-6 34-6 42 0 0 12-8 20-21 20S80 68 80 56z" fill="#3a2a26" opacity=".55"/>
<path d="M88 55c6-4 20-4 26 0l2 5c-8-3-22-3-30 0z" fill="#2a1f1d"/>
<path d="M78 34h19v11H79zM103 34h20l-1 11h-18z" fill="rgba(220,225,235,.45)" stroke="#5a5a5e" stroke-width="1.300"/>
<path d="M70 30c2 10 2 22 8 30M130 30c-1 10 0 24-4 34" stroke="#141212" stroke-width="4" fill="none"/>
</g></svg><span class="t" style="left:8.8px;top:80.8px;font-size:10px;letter-spacing:-0.27px;color:#fff;font-weight:bold;text-shadow:0 0 2px rgba(0,0,0,.55);">JOÃO EUDMAR DE ALMEIDA</span><i class="b" style="left:147px;top:7.200px;width:20px;height:20px;border-radius:50%;background:rgba(52,54,56,.92)"></i><svg class="b" style="left:150.5px;top:10.500px" width="13" height="13.500" viewBox="0 0 13 13.500"><rect x="4.600" y="1" width="3.800" height="6.800" rx="1.900" fill="#e8e8e8"/><path d="M2.500 6.500a4 4 0 0 0 8 0M6.500 10.500v2" fill="none" stroke="#e8e8e8" stroke-width="1.100"/><path d="M1.500 1.500l10.500 11" stroke="rgba(52,54,56,.92)" stroke-width="2.600"/><path d="M1.500 1.500l10.500 11" stroke="#e8e8e8" stroke-width="1.100"/></svg></div>
<div class="tile" style="left:1203px;top:628px;width:173.6px;height:98px;border-radius:9px;"><svg class="b" style="left:0;top:0" width="173.6" height="98" viewBox="0 0 173.6 98" preserveAspectRatio="none"><g filter="url(#bl08)"><rect width="174" height="98" fill="#babab0"/>
<rect x="0" y="0" width="41" height="98" fill="#adaea5"/>
<path d="M41 0v98" stroke="#4a4a46" stroke-width="1.600"/>
<rect x="44.500" y="0" width="130" height="26" fill="#e9eef2"/>
<rect x="44.500" y="0" width="100" height="18" fill="#f1f3f4"/>
<rect x="150" y="4" width="24" height="22" fill="#d4e2f0"/>
<g stroke="#b9c6d4" stroke-width="1" opacity=".8"><path d="M60 6h70M60 11h76M72 3v14M100 3v14M124 3v14"/></g>
</g>
<g filter="url(#bl1)">
<path d="M63 72c-3-26 6-47 29-49 20-1 31 12 32 32 1 14 0 30-2 43H64c-1-9-1-17-1-26z" fill="#9c805f"/>
<path d="M112 34c8 6 12 16 12 30v34h-8c2-20 2-44-4-64z" fill="#6e5642" opacity=".8"/>
<path d="M41 98c4-7 12-10 24-11h54c10 1 16 5 18 11z" fill="#e8dcd0"/>
<ellipse cx="93" cy="64" rx="23.500" ry="33" fill="#dcb39f"/>
<ellipse cx="92" cy="44" rx="17" ry="10" fill="#e6c2ae" opacity=".8"/>
<path d="M70 50c2-16 10-25 22-25 12 0 21 9 24 25-6-10-14-15-23-15-9 0-17 5-23 15z" fill="#a98c68"/>
<path d="M78 63q5-2.500 10 0M98 63q5-2.500 10 0" stroke="#7a5a4a" stroke-width="1.600" fill="none"/>
<path d="M90 66c-1 5-2 8-3 10 3 2 8 2 11 0" stroke="#c49884" stroke-width="1.500" fill="none"/>
<path d="M86 86q7 2 13 0" stroke="#b8706a" stroke-width="1.800" fill="none"/>
<circle cx="116" cy="80" r="1.800" fill="#c9a24a"/>
</g></svg><span class="t" style="left:8.8px;top:80.8px;font-size:10px;letter-spacing:-0.11px;color:#fff;font-weight:bold;text-shadow:0 0 2px rgba(0,0,0,.55);">Rena Machado</span><i class="b" style="left:146.6px;top:7.200px;width:20px;height:20px;border-radius:50%;background:rgba(52,54,56,.92)"></i><svg class="b" style="left:150.1px;top:10.500px" width="13" height="13.500" viewBox="0 0 13 13.500"><rect x="4.600" y="1" width="3.800" height="6.800" rx="1.900" fill="#e8e8e8"/><path d="M2.500 6.500a4 4 0 0 0 8 0M6.500 10.500v2" fill="none" stroke="#e8e8e8" stroke-width="1.100"/><path d="M1.500 1.500l10.500 11" stroke="rgba(52,54,56,.92)" stroke-width="2.600"/><path d="M1.500 1.500l10.500 11" stroke="#e8e8e8" stroke-width="1.100"/></svg></div>
<div class="tile" style="left:1387px;top:628px;width:174px;height:98px;border-radius:9px;"><svg class="b" style="left:0;top:0" width="174" height="98" viewBox="0 0 174 98" preserveAspectRatio="none"><rect width="174" height="98" fill="#343537"/>
<g filter="url(#bl08)">
<clipPath id="m1"><circle cx="72" cy="41" r="15.500"/></clipPath><g clip-path="url(#m1)"><rect x="50" y="20" width="44" height="44" fill="#26304a"/><rect x="50" y="20" width="12" height="44" fill="#3a5aa0"/>
<ellipse cx="72" cy="38" rx="12" ry="13" fill="#2a1c18"/><ellipse cx="72" cy="40" rx="8" ry="9.500" fill="#c8907a"/><path d="M58 58c2-8 8-10 14-10s12 3 14 10z" fill="#1a1a1e"/><path d="M68 44q4 2.500 8 0" stroke="#fff" stroke-width="1.500" fill="none"/></g>
<clipPath id="m2"><circle cx="103" cy="41" r="16.500"/></clipPath><g clip-path="url(#m2)"><rect x="84" y="22" width="40" height="40" fill="#f2f2f0"/><rect x="112" y="22" width="10" height="40" fill="#cfe0cf"/>
<ellipse cx="103" cy="37" rx="11" ry="12" fill="#241a1c"/><ellipse cx="103" cy="40" rx="7.500" ry="9" fill="#dcb4a4"/><rect x="96" y="35" width="14" height="4.500" rx="2" fill="#6a3a5a"/><path d="M90 60c2-8 7-10 13-10s11 2 13 10z" fill="#5a8a8a"/><path d="M95 52c4 4 12 4 16 0l2 8H93z" fill="#e8e4d0"/></g>
</g></svg><span class="t" style="left:48.3px;top:64.1px;font-size:10px;letter-spacing:-0.17px;color:#fff;font-weight:bold;">Mais 36 pessoas</span></div>
<div class="tile" style="left:1295px;top:735.8px;width:173.8px;height:97px;border-radius:9px;"><svg class="b" style="left:0;top:0" width="173.8" height="97" viewBox="0 0 173.8 97" preserveAspectRatio="none"><radialGradient id="an" cx=".55" cy=".6" r=".75"><stop offset="0" stop-color="#3d5880"/><stop offset=".55" stop-color="#2a426a"/><stop offset="1" stop-color="#1a2d50"/></radialGradient>
<rect width="174" height="98" fill="url(#an)"/>
<g filter="url(#bl08)"><clipPath id="anc"><circle cx="87.200" cy="48.700" r="20"/></clipPath><g clip-path="url(#anc)">
<rect x="60" y="25" width="56" height="50" fill="#2a2a2a"/><rect x="66" y="28" width="14" height="40" fill="#8a8a8a"/>
<path d="M74 44c0-12 8-18 18-18 12 0 18 10 16 24l-4 20H80z" fill="#1c1c1c"/>
<ellipse cx="93" cy="50" rx="11" ry="14" fill="#c4c4c4"/>
<path d="M80 40c4-10 18-12 26 0-8-4-18-4-26 0z" fill="#1a1a1a"/>
<path d="M76 70c0-8 4-14 10-14l8 6-4 10z" fill="#d8d8d8"/>
<path d="M88 56q5 3 10 0" stroke="#555" stroke-width="1.300" fill="none"/>
</g></g></svg><span class="t" style="left:8.8px;top:79.8px;font-size:10px;letter-spacing:-0.30px;color:#fff;font-weight:bold;text-shadow:0 0 2px rgba(0,0,0,.55);">ANA LIVIA ALVES</span><i class="b" style="left:146.8px;top:7.200px;width:20px;height:20px;border-radius:50%;background:#0b3a8a"></i><svg class="b" style="left:150.3px;top:10.500px" width="13" height="13.500" viewBox="0 0 13 13.500"><rect x="4.600" y="1" width="3.800" height="6.800" rx="1.900" fill="#c8d8f8"/><path d="M2.500 6.500a4 4 0 0 0 8 0M6.500 10.500v2" fill="none" stroke="#c8d8f8" stroke-width="1.100"/><path d="M1.500 1.500l10.500 11" stroke="#0b3a8a" stroke-width="2.600"/><path d="M1.500 1.500l10.500 11" stroke="#c8d8f8" stroke-width="1.100"/></svg></div>

<span class="t" style="left:20.0px;top:858.9px;font-size:13.4px;letter-spacing:0.55px;color:#e8eaed;font-weight:bold;">09:09</span>
<i class="b" style="left:66.3px;top:860.0px;width:1.2px;height:13.0px;background:#80868b"></i>
<span class="t" style="left:77.5px;top:858.9px;font-size:13.4px;letter-spacing:0.36px;color:#e8eaed;font-weight:bold;">qrw-taws-zek</span>
<i class="b" style="left:565.0px;top:846.0px;width:73.7px;height:40.4px;background:#601410;border-radius:11px"></i>
<i class="b" style="left:598.5px;top:846.0px;width:40.2px;height:40.4px;background:#c9a09f;border-radius:10px"></i>
<svg class="b" style="left:580.0px;top:863.0px;" width="10.5" height="7.0" viewBox="0 0 10.500 7"><path d="M1 6l4.200-4.300L9.500 6" fill="none" stroke="#f9dedc" stroke-width="1.700"/></svg>
<i class="b" style="left:625.3px;top:843.0px;width:17.0px;height:17.0px;background:#fdd663;border-radius:50%"></i>
<i class="b" style="left:632.8px;top:846.7px;width:2.0px;height:7.0px;background:#5a4300;border-radius:1px"></i>
<i class="b" style="left:632.8px;top:855.0px;width:2.0px;height:2.0px;background:#5a4300;border-radius:1px"></i>
<i class="b" style="left:645.0px;top:846.0px;width:74.0px;height:40.4px;background:#601410;border-radius:11px"></i>
<i class="b" style="left:678.8px;top:846.0px;width:40.2px;height:40.4px;background:#c9a09f;border-radius:10px"></i>
<svg class="b" style="left:660.0px;top:863.0px;" width="10.5" height="7.0" viewBox="0 0 10.500 7"><path d="M1 6l4.200-4.300L9.500 6" fill="none" stroke="#f9dedc" stroke-width="1.700"/></svg>
<i class="b" style="left:705.5px;top:843.0px;width:17.0px;height:17.0px;background:#fdd663;border-radius:50%"></i>
<i class="b" style="left:713.0px;top:846.7px;width:2.0px;height:7.0px;background:#5a4300;border-radius:1px"></i>
<i class="b" style="left:713.0px;top:855.0px;width:2.0px;height:2.0px;background:#5a4300;border-radius:1px"></i>
<svg class="b" style="left:610.0px;top:856.5px;" width="18.0" height="20.5" viewBox="0 0 18 20.500"><rect x="6.300" y="1" width="5.400" height="10.500" rx="2.700" fill="none" stroke="#5c1512" stroke-width="1.500"/><path d="M3 9.500a6 6 0 0 0 12 0M9 15.500v3.500" fill="none" stroke="#5c1512" stroke-width="1.500"/><path d="M2 2l14.500 16.500" stroke="#c9a09f" stroke-width="3.600"/><path d="M2 2l14.500 16.500" stroke="#5c1512" stroke-width="1.500"/></svg>
<svg class="b" style="left:689.0px;top:856.5px;" width="20.0" height="20.5" viewBox="0 0 20 20.500"><path d="M2 4.500h11.500v11.500H2zM13.500 9l4.500-3.500v9L13.500 11" fill="none" stroke="#5c1512" stroke-width="1.600"/><path d="M1 1.500l16 17.500" stroke="#c9a09f" stroke-width="3.600"/><path d="M1 1.500l16 17.500" stroke="#5c1512" stroke-width="1.600"/></svg>
<i class="b" style="left:725.2px;top:846.5px;width:46.8px;height:39.7px;background:#333537;border-radius:20px"></i>
<i class="b" style="left:779.0px;top:846.5px;width:46.5px;height:39.7px;background:#333537;border-radius:20px"></i>
<i class="b" style="left:832.0px;top:846.5px;width:46.7px;height:39.7px;background:#333537;border-radius:20px"></i>
<i class="b" style="left:885.5px;top:846.5px;width:46.3px;height:39.7px;background:#333537;border-radius:20px"></i>
<i class="b" style="left:939.0px;top:846.5px;width:30.2px;height:39.7px;background:#333537;border-radius:20px"></i>
<i class="b" style="left:975.5px;top:846.0px;width:60.3px;height:40.4px;background:#dc362e;border-radius:20px"></i>
<svg class="b" style="left:740.0px;top:858.0px;" width="17.5" height="17.0" viewBox="0 0 17.500 17"><rect x="1" y="1.500" width="15.500" height="14" rx="1" fill="none" stroke="#e3e3e3" stroke-width="1.900"/><path d="M7.500 6.800H4.500v3.600h3M13.200 6.800h-3v3.600h3" fill="none" stroke="#e3e3e3" stroke-width="1.500"/></svg>
<svg class="b" style="left:793.0px;top:857.0px;" width="18.5" height="18.5" viewBox="0 0 18.500 18.500"><circle cx="9.250" cy="9.250" r="8" fill="none" stroke="#e3e3e3" stroke-width="1.800"/><circle cx="6.300" cy="7" r="1.300" fill="#e3e3e3"/><circle cx="12.200" cy="7" r="1.300" fill="#e3e3e3"/><path d="M4.500 10.500h9.500a4.800 4.800 0 0 1-9.500 0z" fill="#e3e3e3"/></svg>
<svg class="b" style="left:846.0px;top:858.5px;" width="19.0" height="16.0" viewBox="0 0 19 16"><rect x="1" y="1" width="17" height="14" rx="1.500" fill="none" stroke="#e3e3e3" stroke-width="1.800"/><path d="M9.500 12V6.500M6.500 8.300l3-3 3 3" fill="none" stroke="#e3e3e3" stroke-width="1.800"/></svg>
<svg class="b" style="left:899.0px;top:855.5px;" width="19.0" height="22.0" viewBox="0 0 19 22"><path d="M5.500 12V4.500a1.300 1.300 0 0 1 2.600 0V10 2.800a1.300 1.300 0 0 1 2.600 0V10 3.800a1.300 1.300 0 0 1 2.600 0V11 6.500a1.300 1.300 0 0 1 2.600 0V14c0 4-2.500 6.500-6 6.500-3 0-4.500-1.500-6-4L1.500 12.300c-.5-1 .8-2 1.800-1z" fill="none" stroke="#e3e3e3" stroke-width="1.700" stroke-linejoin="round"/></svg>
<i class="b" style="left:952.3px;top:859.7px;width:3.7px;height:3.7px;background:#e3e3e3;border-radius:50%"></i>
<i class="b" style="left:952.3px;top:865.2px;width:3.7px;height:3.7px;background:#e3e3e3;border-radius:50%"></i>
<i class="b" style="left:952.3px;top:870.7px;width:3.7px;height:3.7px;background:#e3e3e3;border-radius:50%"></i>
<svg class="b" style="left:995.0px;top:861.0px;" width="22.0" height="10.5" viewBox="0 0 22 10.500"><path d="M11 1.200c-3.800 0-7.300 1.300-10 3.700-.6.600-.6 1.300-.1 1.800l1.800 1.800c.5.500 1.200.5 1.700.1.900-.7 1.800-1.300 2.800-1.700V4.600c2.400-.8 5.200-.8 7.600 0v2.300c1 .4 1.900 1 2.800 1.700.5.400 1.200.4 1.700-.1l1.800-1.800c.5-.5.500-1.200-.1-1.800-2.700-2.400-6.200-3.700-10-3.700z" fill="#fff"/></svg>
<svg class="b" style="left:1441.5px;top:857.5px;" width="18.5" height="18.5" viewBox="0 0 18.500 18.500"><circle cx="9.250" cy="9.250" r="7.800" fill="none" stroke="#fff" stroke-width="1.800"/><rect x="8.300" y="8.200" width="1.900" height="5.500" fill="#fff"/><rect x="8.300" y="4.800" width="1.900" height="1.900" fill="#fff"/></svg>
<svg class="b" style="left:1480.5px;top:859.0px;" width="20.5" height="16.0" viewBox="0 0 20.500 16"><circle cx="7.500" cy="4.500" r="3" fill="none" stroke="#fff" stroke-width="1.800"/><path d="M1 14.500c0-3.500 3.500-4.800 6.500-4.800s6.500 1.300 6.500 4.800z" fill="none" stroke="#fff" stroke-width="1.800"/><path d="M13.500 1.600a3 3 0 0 1 0 5.800M16 10.300c2 .6 3.500 2 3.500 4.200h-3" fill="none" stroke="#fff" stroke-width="1.800"/></svg>
<i class="b" style="left:1492.0px;top:839.5px;width:24.0px;height:16.5px;background:#5f6368;border-radius:8px"></i>
<span class="t" style="left:1498.0px;top:842.2px;font-size:9.8px;letter-spacing:0.55px;color:#f1f3f4;font-weight:bold;">46</span>
<svg class="b" style="left:1522.0px;top:858.0px;" width="18.0" height="19.0" viewBox="0 0 18 19"><path d="M1.500 1.500h15v12h-11L1.500 17.500z" fill="none" stroke="#fff" stroke-width="1.900"/><path d="M4.500 5h9M4.500 7.600h9M4.500 10.200h9" stroke="#fff" stroke-width="1.300"/></svg>
<i class="b" style="left:1535.0px;top:850.9px;width:7.0px;height:7.0px;background:#8ab4f8;border-radius:50%"></i>
<i class="b" style="left:1563.5px;top:859.2px;width:3.6px;height:3.6px;background:#fff;border-radius:1px"></i>
<i class="b" style="left:1563.5px;top:864.8px;width:3.6px;height:3.6px;background:#fff;border-radius:1px"></i>
<i class="b" style="left:1563.5px;top:870.4px;width:3.6px;height:3.6px;background:#fff;border-radius:1px"></i>
<i class="b" style="left:1569.1px;top:859.2px;width:3.6px;height:3.6px;background:#fff;border-radius:1px"></i>
<i class="b" style="left:1569.1px;top:864.8px;width:3.6px;height:3.6px;background:#fff;border-radius:1px"></i>
<i class="b" style="left:1569.1px;top:870.4px;width:3.6px;height:3.6px;background:#fff;border-radius:1px"></i>
<i class="b" style="left:1574.7px;top:859.2px;width:3.6px;height:3.6px;background:#fff;border-radius:1px"></i>
<i class="b" style="left:1574.7px;top:864.8px;width:3.6px;height:3.6px;background:#fff;border-radius:1px"></i>
<i class="b" style="left:1574.7px;top:870.4px;width:3.6px;height:3.6px;background:#fff;border-radius:1px"></i>

</div>
</body>
</html>
